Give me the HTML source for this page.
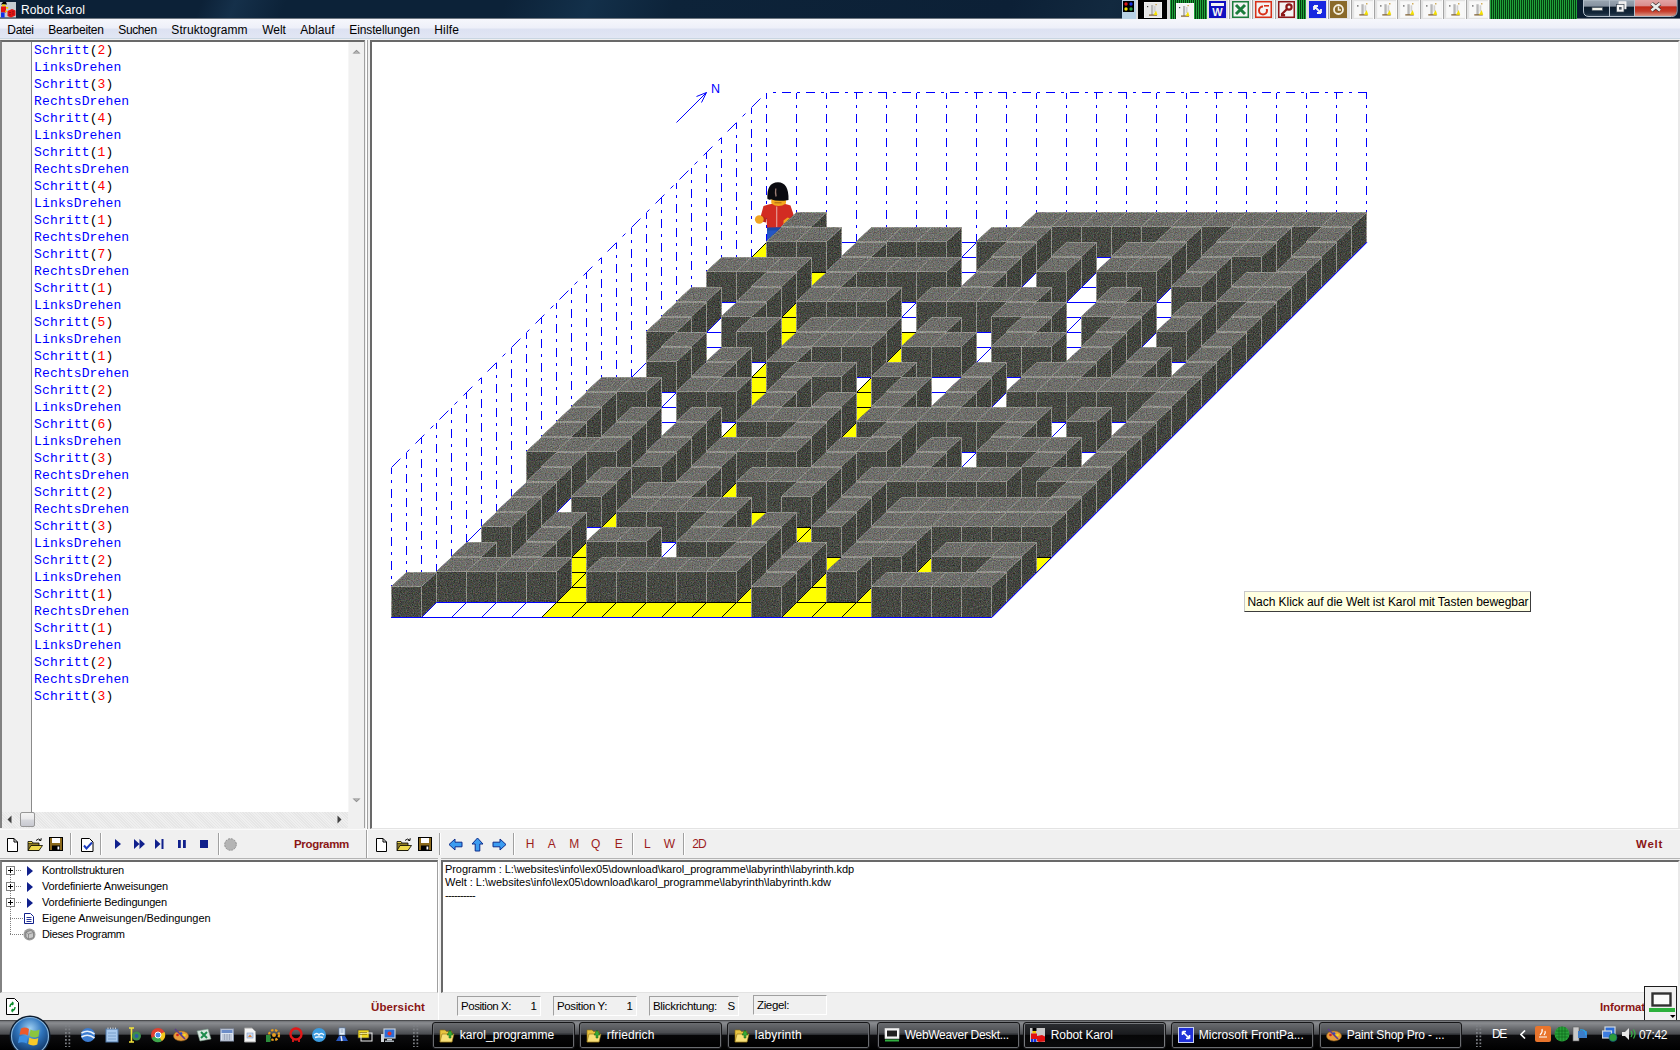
<!DOCTYPE html>
<html lang="de"><head><meta charset="utf-8"><title>Robot Karol</title>
<style>
*{box-sizing:border-box;margin:0;padding:0}
html,body{width:1680px;height:1050px;overflow:hidden;background:#f0f0f0;font-family:"Liberation Sans",sans-serif;font-size:12px;color:#000}
body{position:relative}
.a{position:absolute;white-space:nowrap}
/* title bar */
#tb{position:absolute;left:0;top:0;width:1680px;height:19px;background:linear-gradient(112deg,#0c2137 0,#0c2137 12%,#15304a 14%,#0c2238 17%,#0c2238 30%,#13304a 35%,#0d2339 40%,#0c2036 60%,#12293f 66%,#0b1e33 72%,#0a1c30 100%);border-bottom:1px solid #6d7680}
#tbt{left:21px;top:2.7px;color:#fff;font-size:12px;line-height:15px}
/* menu */
#mb{position:absolute;left:0;top:19px;width:1680px;height:20px;background:linear-gradient(#f6f7fc 0%,#eef0f9 45%,#dde2f2 55%,#e1e6f4 100%);border-bottom:1px solid #c9d6e2}
#mb span{position:absolute;top:4px;font-size:12px;line-height:15px;color:#000}
/* editor */
#ed{position:absolute;left:0;top:40px;width:365px;height:788px;background:#fff;border-top:2px solid #696969;border-left:2px solid #828282;border-right:1px solid #a0a0a0}
#gut{position:absolute;left:0;top:0;width:30px;height:770px;background:#f0f0f0;border-right:1px solid #8a8a8a}
#code{position:absolute;left:32.1px;top:-0.2px;font-family:"Liberation Mono",monospace;font-size:13px;line-height:17px;color:#0000ff;white-space:pre;letter-spacing:0.13px}
#code i{font-style:normal;color:#000}
#code b{font-weight:normal;color:#ff0000}
#vsb{position:absolute;left:346px;top:0;width:16px;height:770px;background:#f0f0f0;border-left:1px solid #f6f6f6}
#hsb{position:absolute;left:0;top:770px;width:346px;height:16px;background:repeating-linear-gradient(45deg,#efefef 0,#efefef 1px,#e6e6e6 1px,#e6e6e6 2px)}
#hsc{position:absolute;left:346px;top:770px;width:16px;height:16px;background:#f0f0f0}
#thumb{position:absolute;left:18px;top:0;width:15px;height:15px;border:1px solid #979797;border-radius:2px;background:linear-gradient(#f4f4f4 0%,#e9e9eb 45%,#d6d7dc 55%,#c8c9d0 100%)}
/* splitter */
#spl{position:absolute;left:366px;top:40px;width:4px;height:790px;background:#f0f0f0;border-left:1px solid #fff;border-right:0}
#spl2{position:absolute;left:367px;top:40px;width:1px;height:790px;background:#a0a0a0}
/* world */
#world{position:absolute;left:370px;top:40px;width:1310px;height:789px;background:#fff;border-top:2px solid #696969;border-left:2px solid #696969;border-right:2px solid #e9e9e9;border-bottom:1px solid #e3e3e3}
#mz{position:absolute;left:372px;top:42px;overflow:hidden}
#tip{left:1244px;top:591px;width:287px;height:21px;background:#ffffe1;border:1px solid;border-color:#c8c8c8 #3c3c3c #3c3c3c #c8c8c8;font-size:12px;line-height:19px}
#tip span{position:absolute;left:2.5px;top:1px}
/* toolbars */
.red{color:#8b1616;font-weight:bold;font-size:11.5px;line-height:15px}
.let{color:#9c1c1c;font-size:12px;line-height:15px;top:837.2px}
.sep{position:absolute;width:2px;height:22px;border-left:1px solid #a0a0a0;border-right:1px solid #fff;top:833px}
#tl{position:absolute;left:0;top:829px;width:1680px;height:1px;background:#fafafa}
/* bottom */
#tree{position:absolute;left:0;top:860px;width:438px;height:133px;box-shadow:0 -1px 0 #f0f0f0,0 -2px 0 #b4b4b4;border-bottom:1px solid #e3e3e3;background:#fff;border-top:2px solid #696969;border-left:2px solid #828282;border-right:1px solid #a0a0a0}
#tree .t{position:absolute;left:40px;font-size:11px;line-height:15px;white-space:nowrap}
#log{position:absolute;left:441px;top:860px;width:1239px;height:133px;background:#fff;border-top:2px solid #696969;border-left:2px solid #696969;border-right:2px solid #e9e9e9;border-bottom:1px solid #e3e3e3;box-shadow:0 -1px 0 #f0f0f0,0 -2px 0 #b4b4b4}
#log span{position:absolute;left:2px;font-size:11px;line-height:13px;white-space:nowrap}
.sf{position:absolute;top:996px;height:20px;border:1px solid;border-color:#a0a0a0 #fff #fff #a0a0a0;font-size:11.5px;line-height:17px}
.sf span{position:absolute;top:1.3px;white-space:nowrap}
/* taskbar */
#tk{position:absolute;left:0;top:1020px;width:1680px;height:30px;background:linear-gradient(#38393b 0,#75777b 1.5px,#8a8c90 3px,#6c6e72 8px,#4a4c50 14px,#0c0c0e 15.5px,#000 100%)}
.tb{position:absolute;top:1022px;height:27px;width:143px;border:1px solid #161618;border-radius:3px;box-shadow:inset 0 0 0 1px #6a6c70;background:linear-gradient(#6a6c70 0,#4c4e52 38%,#2c2e32 46%,#060607 50%,#000 100%);color:#fff;font-size:12px;line-height:15px}
.tb span{position:absolute;left:26.8px;top:5px;white-space:nowrap}
.tb.act{background:linear-gradient(#2c2e32 0,#1a1b1e 45%,#060607 50%,#0a0a0c 100%);box-shadow:inset 0 0 0 1px #77797d}
.tw{color:#fff;font-size:12px;line-height:15px}
#appico{left:0;top:0}
#bx1{left:1122px;top:0px;width:14px;height:19px;background:#b9d2e6}
#dots{left:1123px;top:1px}
#bx2{left:1136px;top:0px;width:2px;height:19px;background:#dcdcdc}
#bx3{left:1138px;top:0px;width:29px;height:19px;background:#000}
#bx4{left:1167px;top:0px;width:3px;height:19px;background:#d8d8d8}
#bx5{left:1170px;top:0px;width:37px;height:19px;background:repeating-linear-gradient(90deg,#1fa33a 0,#1fa33a 1px,#053d10 1px,#053d10 2px)}
#bx6{left:1297px;top:0px;width:9px;height:19px;background:repeating-linear-gradient(90deg,#1fa33a 0,#1fa33a 1px,#053d10 1px,#053d10 2px)}
#bx7{left:1490px;top:0px;width:87px;height:19px;background:repeating-linear-gradient(90deg,#1fa33a 0,#1fa33a 1px,#053d10 1px,#053d10 2px)}
#dc8{left:1144px;top:2px}
#dc9{left:1176px;top:3px}
#bx10{left:1207px;top:0px;width:90px;height:19px;background:#e3e3e3}
#bx11{left:1306px;top:0px;width:184px;height:19px;background:#e3e3e3}
#bx12{left:1227.5px;top:0px;width:2px;height:19px;background:#fbfbfb}
#bx12{border-right:1px solid #a4a4a4}
#bx13{left:1250.5px;top:0px;width:2px;height:19px;background:#fbfbfb}
#bx13{border-right:1px solid #a4a4a4}
#bx14{left:1273.5px;top:0px;width:2px;height:19px;background:#fbfbfb}
#bx14{border-right:1px solid #a4a4a4}
#bx15{left:1326.5px;top:0px;width:2px;height:19px;background:#fbfbfb}
#bx15{border-right:1px solid #a4a4a4}
#bx16{left:1349.5px;top:0px;width:2px;height:19px;background:#fbfbfb}
#bx16{border-right:1px solid #a4a4a4}
#bx17{left:1372.5px;top:0px;width:2px;height:19px;background:#fbfbfb}
#bx17{border-right:1px solid #a4a4a4}
#bx18{left:1395.5px;top:0px;width:2px;height:19px;background:#fbfbfb}
#bx18{border-right:1px solid #a4a4a4}
#bx19{left:1418.5px;top:0px;width:2px;height:19px;background:#fbfbfb}
#bx19{border-right:1px solid #a4a4a4}
#bx20{left:1441.5px;top:0px;width:2px;height:19px;background:#fbfbfb}
#bx20{border-right:1px solid #a4a4a4}
#bx21{left:1464.5px;top:0px;width:2px;height:19px;background:#fbfbfb}
#bx21{border-right:1px solid #a4a4a4}
#bx22{left:1487.5px;top:0px;width:2px;height:19px;background:#fbfbfb}
#bx22{border-right:1px solid #a4a4a4}
#ic23{left:1209px;top:1px}
#ic24{left:1232px;top:1px}
#ic25{left:1255px;top:1px}
#ic26{left:1278px;top:1px}
#ic27{left:1309px;top:1px}
#ic28{left:1330px;top:1px}
#dc29{left:1353.5px;top:1px}
#dc30{left:1376.5px;top:1px}
#dc31{left:1399.5px;top:1px}
#dc32{left:1422.5px;top:1px}
#dc33{left:1445.5px;top:1px}
#dc34{left:1468.5px;top:1px}
#wbtn{left:1578px;top:0}
#mi0{left:7.3px}
#mi1{left:48.3px}
#mi2{left:118.3px}
#mi3{left:171.3px}
#mi4{left:262.3px}
#mi5{left:300.3px}
#mi6{left:349.3px}
#mi7{left:434.3px}
#vup{left:3px;top:7px}
#vdn{left:3px;top:756px}
#hlf{left:5px;top:3px}
#hrt{left:335px;top:3px}
#tsp{left:366px;top:830px;width:2px;height:29px;border-left:1px solid #a0a0a0;border-right:1px solid #fff}
#pnew{left:7px;top:838px}
#popn{left:26.5px;top:836.5px}
#psav{left:49px;top:837px}
#wnew{left:376px;top:838px}
#wopn{left:395.5px;top:836.5px}
#wsav{left:418px;top:837px}
#sp1{left:69.5px}
#sp2{left:99.5px}
#sp3{left:217.5px}
#chk{left:81px;top:837.5px}
#play{left:115px;top:839px}
#ffw{left:133.5px;top:839px}
#stp{left:155px;top:839px}
#pau{left:178px;top:840px}
#stop{left:200px;top:840px}
#gcir{left:223.5px;top:838px}
#lprog{left:294px;top:836.5px}
#sp4{left:438.5px}
#sp5{left:512.5px}
#sp6{left:631.5px}
#sp7{left:683px}
#arl{left:447.5px;top:837px}
#aru{left:469.5px;top:837px}
#arr{left:491.5px;top:837px}
#lt0{left:525.7px}
#lt1{left:547.7px}
#lt2{left:569.3px}
#lt3{left:591px}
#lt4{left:614.7px}
#lt5{left:644px}
#lt6{left:663.7px}
#lt7{left:692.3px}
#lwelt{left:1636px;top:836.5px}
#tr0{top:0.8px}
#pl0{left:4px;top:3.8000000000000007px}
#dl0{left:14px;top:7.800000000000001px;width:6px;height:1px;background:repeating-linear-gradient(90deg,#808080 0,#808080 1px,transparent 1px,transparent 2px)}
#tg0{left:25px;top:3.8000000000000007px}
#tr1{top:16.8px}
#pl1{left:4px;top:19.8px}
#dl1{left:14px;top:23.8px;width:6px;height:1px;background:repeating-linear-gradient(90deg,#808080 0,#808080 1px,transparent 1px,transparent 2px)}
#tg1{left:25px;top:19.8px}
#tr2{top:32.8px}
#pl2{left:4px;top:35.8px}
#dl2{left:14px;top:39.8px;width:6px;height:1px;background:repeating-linear-gradient(90deg,#808080 0,#808080 1px,transparent 1px,transparent 2px)}
#tg2{left:25px;top:35.8px}
#tr3{top:48.8px}
#dl3{left:8px;top:55.8px;width:13px;height:1px;background:repeating-linear-gradient(90deg,#808080 0,#808080 1px,transparent 1px,transparent 2px)}
#tg3{left:22px;top:50.8px}
#tr4{top:64.8px}
#dl4{left:8px;top:71.8px;width:13px;height:1px;background:repeating-linear-gradient(90deg,#808080 0,#808080 1px,transparent 1px,transparent 2px)}
#tg4{left:21px;top:65.8px}
#vdl{left:8px;top:13px;width:1px;height:60px;background:repeating-linear-gradient(#808080 0,#808080 1px,transparent 1px,transparent 2px)}
#lg0{top:0.5px}
#lg1{top:13.5px}
#lg2{top:26.5px}
#rfr{left:6px;top:998px}
#lueb{left:371px;top:1000.3px}
#linf{left:1600px;top:1000.3px}
#vsp{left:438px;top:860px;width:3px;height:160px;background:#f0f0f0;border-left:1px solid #fff}
#sf0{left:457px;width:84px}
#sl0{left:3px}
#sv0{left:72.5px}
#sf1{left:553px;width:84px}
#sl1{left:3px}
#sv1{left:72.5px}
#sf2{left:649px;width:90px}
#sl2{left:3px}
#sv2{left:77.5px}
#sf3{left:753px;width:74px}
#sl3{left:3px}
#sf3{top:995px;height:20px}#sf3 span{top:1.3px}
#inf{left:1644px;top:986px}
#orb{left:9px;top:1015px}
#gr1{left:65px;top:1025px;width:7px;height:22px;background:radial-gradient(circle at 1px 1px,#7c7f84 0.8px,transparent 1px) 0 0/3.5px 3.5px}
#gr2{left:413px;top:1025px;width:7px;height:22px;background:radial-gradient(circle at 1px 1px,#7c7f84 0.8px,transparent 1px) 0 0/3.5px 3.5px}
#gr3{left:1476px;top:1025px;width:7px;height:22px;background:radial-gradient(circle at 1px 1px,#7c7f84 0.8px,transparent 1px) 0 0/3.5px 3.5px}
#ql0{left:80px;top:1027px}
#ql1{left:104px;top:1027px}
#ql2{left:126px;top:1027px}
#ql3{left:150px;top:1027px}
#ql4{left:173px;top:1027px}
#ql5{left:196px;top:1027px}
#ql6{left:219px;top:1027px}
#ql7{left:242px;top:1027px}
#ql8{left:265px;top:1027px}
#ql9{left:288px;top:1027px}
#ql10{left:311px;top:1027px}
#ql11{left:334px;top:1027px}
#ql12{left:357px;top:1027px}
#ql13{left:380px;top:1027px}
#tb0{left:432px}
#ti0{left:6px;top:4px}
#tb1{left:579px}
#ti1{left:6px;top:4px}
#tb2{left:727px}
#ti2{left:6px;top:4px}
#tb3{left:877px}
#ti3{left:6px;top:4px}
#tb4{left:1023px}
#ti4{left:6px;top:4px}
#tb5{left:1171px}
#ti5{left:6px;top:4px}
#tb6{left:1319px}
#ti6{left:6px;top:4px}
#tde{left:1492px;top:1026.5px}
#tlt{left:1520px;top:1030px}
#ty0{left:1535px;top:1026px}
#ty1{left:1554px;top:1026px}
#ty2{left:1572px;top:1026px}
#ty3{left:1602px;top:1026px}
#ty4{left:1621px;top:1026px}
#tclk{left:1639px;top:1028.2px}

</style></head>
<body>
<div id="tb"></div>
<svg class="a" id="appico" width="18" height="19" viewBox="0 0 18 19"><rect x="0" y="2" width="16" height="15.5" fill="#c4ccd2"/><path d="M1 4.5 L3 2 H6 L7 4.5 Z" fill="#000"/><rect x="2" y="4.5" width="3.5" height="2" fill="#f4d000"/><rect x="1" y="6.5" width="5" height="6" fill="#e41010"/><rect x="6" y="7" width="2.2" height="1.6" fill="#f4d000"/><rect x="5.2" y="10.5" width="1.8" height="1.6" fill="#f4d000"/><rect x="1" y="12.5" width="3.6" height="5" fill="#1030e8"/><path d="M7.5 11 L12 9 L15.5 10.5 V15.5 L11 17.5 L7.5 16 Z" fill="#e01414"/><path d="M9 12.5 h2 M12 11.8 h2 M9 14.8 h2 M12 14 h2" stroke="#8c1010" stroke-width="0.8"/></svg>
<span class="a" id="tbt" style="letter-spacing:0.057px">Robot Karol</span>
<div class="a" id="bx1"></div>
<svg class="a" id="dots" width="11" height="11"><rect width="11" height="11" fill="#000"/><circle cx="3" cy="3" r="1.7" fill="#e01818"/><circle cx="8" cy="3" r="1.7" fill="#1830e0"/><circle cx="3" cy="8" r="1.7" fill="#f0e000"/><circle cx="8" cy="8" r="1.7" fill="#28a040"/></svg>
<div class="a" id="bx2"></div>
<div class="a" id="bx3"></div>
<div class="a" id="bx4"></div>
<div class="a" id="bx5"></div>
<div class="a" id="bx6"></div>
<div class="a" id="bx7"></div>
<svg class="a" id="dc8" width="18" height="16" viewBox="0 0 18 16"><rect width="18" height="16" fill="#e6e6e6" stroke="#f8f8f8" stroke-width="1"/><rect x="7" y="3" width="2.2" height="10" fill="#b8b8b8"/><rect x="10" y="4" width="1.6" height="6" fill="#d0d0d0"/><rect x="5" y="12.5" width="8" height="1.2" fill="#806030"/><polygon points="9.5,13 13.5,13 12,8.5" fill="#f4e000"/><rect x="3" y="4" width="1.2" height="1.2" fill="#404040"/><rect x="11.5" y="2" width="1.2" height="1.2" fill="#c09020"/></svg>
<svg class="a" id="dc9" width="18" height="16" viewBox="0 0 18 16"><rect width="18" height="16" fill="#f4f4f4" stroke="#ffffff" stroke-width="1"/><rect x="7" y="3" width="2.2" height="10" fill="#b8b8b8"/><rect x="10" y="4" width="1.6" height="6" fill="#d0d0d0"/><rect x="5" y="12.5" width="8" height="1.2" fill="#806030"/><polygon points="9.5,13 13.5,13 12,8.5" fill="#f4e000"/><rect x="3" y="4" width="1.2" height="1.2" fill="#404040"/><rect x="11.5" y="2" width="1.2" height="1.2" fill="#c09020"/></svg>
<div class="a" id="bx10"></div>
<div class="a" id="bx11"></div>
<div class="a" id="bx12"></div>
<div class="a" id="bx13"></div>
<div class="a" id="bx14"></div>
<div class="a" id="bx15"></div>
<div class="a" id="bx16"></div>
<div class="a" id="bx17"></div>
<div class="a" id="bx18"></div>
<div class="a" id="bx19"></div>
<div class="a" id="bx20"></div>
<div class="a" id="bx21"></div>
<div class="a" id="bx22"></div>
<svg class="a" id="ic23" width="17" height="17" viewBox="0 0 17 17"><rect x="0.5" y="0.5" width="16" height="16" fill="#f4f4f4" stroke="#1010c0" stroke-width="2"/><rect x="1" y="1" width="15" height="15" fill="#1010c0"/><rect x="2" y="2" width="13" height="3" fill="#f4f4f4"/><text x="8.5" y="14.5" font-family="Liberation Sans" font-weight="bold" font-size="11" fill="#f4f4f4" text-anchor="middle">W</text></svg>
<svg class="a" id="ic24" width="17" height="17" viewBox="0 0 17 17"><rect x="0.5" y="0.5" width="16" height="16" fill="#f4f4f4" stroke="#1c7c3c" stroke-width="2"/><path d="M4 4 L13 13 M13 4 L4 13" stroke="#1c7c3c" stroke-width="3"/></svg>
<svg class="a" id="ic25" width="17" height="17" viewBox="0 0 17 17"><rect x="0.5" y="0.5" width="16" height="16" fill="#f4f4f4" stroke="#d83018" stroke-width="2"/><circle cx="8" cy="9.5" r="4" fill="none" stroke="#d83018" stroke-width="2"/><rect x="8" y="3" width="6" height="5" fill="#f4f4f4"/><rect x="9" y="4" width="5" height="1.6" fill="#d83018"/></svg>
<svg class="a" id="ic26" width="17" height="17" viewBox="0 0 17 17"><rect x="0.5" y="0.5" width="16" height="16" fill="#f4f4f4" stroke="#8c1818" stroke-width="2"/><circle cx="11" cy="6" r="2.6" fill="none" stroke="#8c1818" stroke-width="2.2"/><path d="M9 8 L4 13 L4 14.5 L6 14.5 L6 13" stroke="#8c1818" stroke-width="2.2" fill="none"/></svg>
<svg class="a" id="ic27" width="17" height="17" viewBox="0 0 17 17"><rect x="0.5" y="0.5" width="16" height="16" fill="#f4f4f4" stroke="#1828e0" stroke-width="2"/><rect x="1" y="1" width="15" height="15" fill="#1828e0"/><path d="M5 5 L12 12 M5 5 L9 5 M5 5 L5 9 M12 12 L8 12 M12 12 L12 8" stroke="#f4f4f4" stroke-width="1.8" fill="none"/></svg>
<svg class="a" id="ic28" width="17" height="17" viewBox="0 0 17 17"><rect x="0.5" y="0.5" width="16" height="16" fill="#f4f4f4" stroke="#8a6a2a" stroke-width="2"/><rect x="1" y="1" width="15" height="15" fill="#8a6a2a"/><circle cx="8.5" cy="8.5" r="4.5" fill="none" stroke="#f4f0e0" stroke-width="1.8"/><path d="M8.5 5.5 L8.5 9 L11 9" stroke="#f4f0e0" stroke-width="1.5" fill="none"/></svg>
<svg class="a" id="dc29" width="19" height="17" viewBox="0 0 18 16"><rect width="18" height="16" fill="#f8f8f8" stroke="#f0f0f0" stroke-width="1"/><rect x="7" y="3" width="2.2" height="10" fill="#b8b8b8"/><rect x="10" y="4" width="1.6" height="6" fill="#d0d0d0"/><rect x="5" y="12.5" width="8" height="1.2" fill="#806030"/><polygon points="9.5,13 13.5,13 12,8.5" fill="#f4e000"/><rect x="3" y="4" width="1.2" height="1.2" fill="#404040"/><rect x="11.5" y="2" width="1.2" height="1.2" fill="#c09020"/></svg>
<svg class="a" id="dc30" width="19" height="17" viewBox="0 0 18 16"><rect width="18" height="16" fill="#f8f8f8" stroke="#f0f0f0" stroke-width="1"/><rect x="7" y="3" width="2.2" height="10" fill="#b8b8b8"/><rect x="10" y="4" width="1.6" height="6" fill="#d0d0d0"/><rect x="5" y="12.5" width="8" height="1.2" fill="#806030"/><polygon points="9.5,13 13.5,13 12,8.5" fill="#f4e000"/><rect x="3" y="4" width="1.2" height="1.2" fill="#404040"/><rect x="11.5" y="2" width="1.2" height="1.2" fill="#c09020"/></svg>
<svg class="a" id="dc31" width="19" height="17" viewBox="0 0 18 16"><rect width="18" height="16" fill="#f8f8f8" stroke="#f0f0f0" stroke-width="1"/><rect x="7" y="3" width="2.2" height="10" fill="#b8b8b8"/><rect x="10" y="4" width="1.6" height="6" fill="#d0d0d0"/><rect x="5" y="12.5" width="8" height="1.2" fill="#806030"/><polygon points="9.5,13 13.5,13 12,8.5" fill="#f4e000"/><rect x="3" y="4" width="1.2" height="1.2" fill="#404040"/><rect x="11.5" y="2" width="1.2" height="1.2" fill="#c09020"/></svg>
<svg class="a" id="dc32" width="19" height="17" viewBox="0 0 18 16"><rect width="18" height="16" fill="#f8f8f8" stroke="#f0f0f0" stroke-width="1"/><rect x="7" y="3" width="2.2" height="10" fill="#b8b8b8"/><rect x="10" y="4" width="1.6" height="6" fill="#d0d0d0"/><rect x="5" y="12.5" width="8" height="1.2" fill="#806030"/><polygon points="9.5,13 13.5,13 12,8.5" fill="#f4e000"/><rect x="3" y="4" width="1.2" height="1.2" fill="#404040"/><rect x="11.5" y="2" width="1.2" height="1.2" fill="#c09020"/></svg>
<svg class="a" id="dc33" width="19" height="17" viewBox="0 0 18 16"><rect width="18" height="16" fill="#f8f8f8" stroke="#f0f0f0" stroke-width="1"/><rect x="7" y="3" width="2.2" height="10" fill="#b8b8b8"/><rect x="10" y="4" width="1.6" height="6" fill="#d0d0d0"/><rect x="5" y="12.5" width="8" height="1.2" fill="#806030"/><polygon points="9.5,13 13.5,13 12,8.5" fill="#f4e000"/><rect x="3" y="4" width="1.2" height="1.2" fill="#404040"/><rect x="11.5" y="2" width="1.2" height="1.2" fill="#c09020"/></svg>
<svg class="a" id="dc34" width="19" height="17" viewBox="0 0 18 16"><rect width="18" height="16" fill="#f8f8f8" stroke="#f0f0f0" stroke-width="1"/><rect x="7" y="3" width="2.2" height="10" fill="#b8b8b8"/><rect x="10" y="4" width="1.6" height="6" fill="#d0d0d0"/><rect x="5" y="12.5" width="8" height="1.2" fill="#806030"/><polygon points="9.5,13 13.5,13 12,8.5" fill="#f4e000"/><rect x="3" y="4" width="1.2" height="1.2" fill="#404040"/><rect x="11.5" y="2" width="1.2" height="1.2" fill="#c09020"/></svg>
<svg class="a" id="wbtn" width="102" height="19" viewBox="0 0 102 19">
<defs><linearGradient id="gb" x1="0" y1="0" x2="0" y2="1"><stop offset="0" stop-color="#9aa6b1"/><stop offset="0.38" stop-color="#8591a0"/><stop offset="0.42" stop-color="#0b1a2a"/><stop offset="0.8" stop-color="#13273a"/><stop offset="1" stop-color="#3a4b5c"/></linearGradient>
<linearGradient id="gr" x1="0" y1="0" x2="0" y2="1"><stop offset="0" stop-color="#e2a4a4"/><stop offset="0.38" stop-color="#d98c8c"/><stop offset="0.42" stop-color="#bf2818"/><stop offset="0.7" stop-color="#c63c2a"/><stop offset="1" stop-color="#d89484"/></linearGradient></defs>
<path d="M5.5 0 V11 Q5.5 16.5 11 16.5 H93.5 Q99 16.5 99 11 V0 Z" fill="url(#gb)" stroke="#b4c0cc" stroke-width="1"/>
<path d="M57 0 H98.5 V11 Q98.5 16 93.5 16 H57 Z" fill="url(#gr)"/>
<path d="M31.5 0 V16.5 M56.5 0 V16.5" stroke="#b4c0cc" stroke-width="1"/>
<rect x="14" y="7.5" width="10.5" height="3" fill="#f0f0ea" stroke="#44505c" stroke-width="0.6"/>
<rect x="41" y="1.8" width="7" height="7" fill="#e8e8e8" stroke="#fff" stroke-width="0.8"/><rect x="38.5" y="4.5" width="7.5" height="7.5" fill="#f4f4f4" stroke="#3c4854" stroke-width="0.7"/><rect x="41" y="7" width="2.6" height="2.6" fill="#4c5864"/>
<path d="M73.5 3.5 L82 10.5 M82 3.5 L73.5 10.5" stroke="#3c3030" stroke-width="4"/><path d="M73.5 3.5 L82 10.5 M82 3.5 L73.5 10.5" stroke="#ececec" stroke-width="2.6"/></svg>
<div id="mb">
<span id="mi0" style="letter-spacing:-0.323px">Datei</span>
<span id="mi1" style="letter-spacing:-0.265px">Bearbeiten</span>
<span id="mi2" style="letter-spacing:-0.384px">Suchen</span>
<span id="mi3" style="letter-spacing:0.087px">Struktogramm</span>
<span id="mi4" style="letter-spacing:-0.099px">Welt</span>
<span id="mi5" style="letter-spacing:0.061px">Ablauf</span>
<span id="mi6" style="letter-spacing:-0.128px">Einstellungen</span>
<span id="mi7" style="letter-spacing:0.137px">Hilfe</span>
</div>
<div id="ed"><div id="gut"></div><div id="code">Schritt<i>(</i><b>2</b><i>)</i>
LinksDrehen
Schritt<i>(</i><b>3</b><i>)</i>
RechtsDrehen
Schritt<i>(</i><b>4</b><i>)</i>
LinksDrehen
Schritt<i>(</i><b>1</b><i>)</i>
RechtsDrehen
Schritt<i>(</i><b>4</b><i>)</i>
LinksDrehen
Schritt<i>(</i><b>1</b><i>)</i>
RechtsDrehen
Schritt<i>(</i><b>7</b><i>)</i>
RechtsDrehen
Schritt<i>(</i><b>1</b><i>)</i>
LinksDrehen
Schritt<i>(</i><b>5</b><i>)</i>
LinksDrehen
Schritt<i>(</i><b>1</b><i>)</i>
RechtsDrehen
Schritt<i>(</i><b>2</b><i>)</i>
LinksDrehen
Schritt<i>(</i><b>6</b><i>)</i>
LinksDrehen
Schritt<i>(</i><b>3</b><i>)</i>
RechtsDrehen
Schritt<i>(</i><b>2</b><i>)</i>
RechtsDrehen
Schritt<i>(</i><b>3</b><i>)</i>
LinksDrehen
Schritt<i>(</i><b>2</b><i>)</i>
LinksDrehen
Schritt<i>(</i><b>1</b><i>)</i>
RechtsDrehen
Schritt<i>(</i><b>1</b><i>)</i>
LinksDrehen
Schritt<i>(</i><b>2</b><i>)</i>
RechtsDrehen
Schritt<i>(</i><b>3</b><i>)</i></div>
<div id="vsb"><svg class="a" id="vup" width="9" height="5" viewBox="0 0 9 5"><path d="M0.5 4.5 L4.5 0.8 L8.5 4.5 Z" fill="#8c8c8c"/><path d="M1.5 4.5 L4.5 2 L7.5 4.5 Z" fill="#b4b4b4"/></svg><svg class="a" id="vdn" width="9" height="5" viewBox="0 0 9 5"><path d="M0.5 0.5 L4.5 4.2 L8.5 0.5 Z" fill="#8c8c8c"/><path d="M1.5 0.5 L4.5 3 L7.5 0.5 Z" fill="#b4b4b4"/></svg></div>
<div id="hsb"><svg class="a" id="hlf" width="5" height="9" viewBox="0 0 5 9"><path d="M4.5 0.5 L0.5 4.5 L4.5 8.5 Z" fill="#404040"/></svg><div id="thumb"></div><svg class="a" id="hrt" width="5" height="9" viewBox="0 0 5 9"><path d="M0.5 0.5 L4.5 4.5 L0.5 8.5 Z" fill="#404040"/></svg></div><div id="hsc"></div>
</div><div id="spl"></div><div id="spl2"></div>
<div id="world"></div>
<svg id="mz" width="1308" height="786" viewBox="372 42 1308 786"><g transform="translate(0.5 0.5)">
<polygon points="391,617 991,617 1366,242 766,242" fill="#fff" stroke="#0000ff" stroke-width="1"/>
<line x1="391" y1="467" x2="391" y2="617" stroke="#0000ff" stroke-width="1" fill="none" stroke-dasharray="9 6 3 6" stroke-dashoffset="2.5" shape-rendering="crispEdges"/>
<line x1="406" y1="452" x2="406" y2="602" stroke="#0000ff" stroke-width="1" fill="none" stroke-dasharray="9 6 3 6" stroke-dashoffset="2.5" shape-rendering="crispEdges"/>
<line x1="421" y1="437" x2="421" y2="587" stroke="#0000ff" stroke-width="1" fill="none" stroke-dasharray="9 6 3 6" stroke-dashoffset="2.5" shape-rendering="crispEdges"/>
<line x1="436" y1="422" x2="436" y2="572" stroke="#0000ff" stroke-width="1" fill="none" stroke-dasharray="9 6 3 6" stroke-dashoffset="2.5" shape-rendering="crispEdges"/>
<line x1="451" y1="407" x2="451" y2="557" stroke="#0000ff" stroke-width="1" fill="none" stroke-dasharray="9 6 3 6" stroke-dashoffset="2.5" shape-rendering="crispEdges"/>
<line x1="466" y1="392" x2="466" y2="542" stroke="#0000ff" stroke-width="1" fill="none" stroke-dasharray="9 6 3 6" stroke-dashoffset="2.5" shape-rendering="crispEdges"/>
<line x1="481" y1="377" x2="481" y2="527" stroke="#0000ff" stroke-width="1" fill="none" stroke-dasharray="9 6 3 6" stroke-dashoffset="2.5" shape-rendering="crispEdges"/>
<line x1="496" y1="362" x2="496" y2="512" stroke="#0000ff" stroke-width="1" fill="none" stroke-dasharray="9 6 3 6" stroke-dashoffset="2.5" shape-rendering="crispEdges"/>
<line x1="511" y1="347" x2="511" y2="497" stroke="#0000ff" stroke-width="1" fill="none" stroke-dasharray="9 6 3 6" stroke-dashoffset="2.5" shape-rendering="crispEdges"/>
<line x1="526" y1="332" x2="526" y2="482" stroke="#0000ff" stroke-width="1" fill="none" stroke-dasharray="9 6 3 6" stroke-dashoffset="2.5" shape-rendering="crispEdges"/>
<line x1="541" y1="317" x2="541" y2="467" stroke="#0000ff" stroke-width="1" fill="none" stroke-dasharray="9 6 3 6" stroke-dashoffset="2.5" shape-rendering="crispEdges"/>
<line x1="556" y1="302" x2="556" y2="452" stroke="#0000ff" stroke-width="1" fill="none" stroke-dasharray="9 6 3 6" stroke-dashoffset="2.5" shape-rendering="crispEdges"/>
<line x1="571" y1="287" x2="571" y2="437" stroke="#0000ff" stroke-width="1" fill="none" stroke-dasharray="9 6 3 6" stroke-dashoffset="2.5" shape-rendering="crispEdges"/>
<line x1="586" y1="272" x2="586" y2="422" stroke="#0000ff" stroke-width="1" fill="none" stroke-dasharray="9 6 3 6" stroke-dashoffset="2.5" shape-rendering="crispEdges"/>
<line x1="601" y1="257" x2="601" y2="407" stroke="#0000ff" stroke-width="1" fill="none" stroke-dasharray="9 6 3 6" stroke-dashoffset="2.5" shape-rendering="crispEdges"/>
<line x1="616" y1="242" x2="616" y2="392" stroke="#0000ff" stroke-width="1" fill="none" stroke-dasharray="9 6 3 6" stroke-dashoffset="2.5" shape-rendering="crispEdges"/>
<line x1="631" y1="227" x2="631" y2="377" stroke="#0000ff" stroke-width="1" fill="none" stroke-dasharray="9 6 3 6" stroke-dashoffset="2.5" shape-rendering="crispEdges"/>
<line x1="646" y1="212" x2="646" y2="362" stroke="#0000ff" stroke-width="1" fill="none" stroke-dasharray="9 6 3 6" stroke-dashoffset="2.5" shape-rendering="crispEdges"/>
<line x1="661" y1="197" x2="661" y2="347" stroke="#0000ff" stroke-width="1" fill="none" stroke-dasharray="9 6 3 6" stroke-dashoffset="2.5" shape-rendering="crispEdges"/>
<line x1="676" y1="182" x2="676" y2="332" stroke="#0000ff" stroke-width="1" fill="none" stroke-dasharray="9 6 3 6" stroke-dashoffset="2.5" shape-rendering="crispEdges"/>
<line x1="691" y1="167" x2="691" y2="317" stroke="#0000ff" stroke-width="1" fill="none" stroke-dasharray="9 6 3 6" stroke-dashoffset="2.5" shape-rendering="crispEdges"/>
<line x1="706" y1="152" x2="706" y2="302" stroke="#0000ff" stroke-width="1" fill="none" stroke-dasharray="9 6 3 6" stroke-dashoffset="2.5" shape-rendering="crispEdges"/>
<line x1="721" y1="137" x2="721" y2="287" stroke="#0000ff" stroke-width="1" fill="none" stroke-dasharray="9 6 3 6" stroke-dashoffset="2.5" shape-rendering="crispEdges"/>
<line x1="736" y1="122" x2="736" y2="272" stroke="#0000ff" stroke-width="1" fill="none" stroke-dasharray="9 6 3 6" stroke-dashoffset="2.5" shape-rendering="crispEdges"/>
<line x1="751" y1="107" x2="751" y2="257" stroke="#0000ff" stroke-width="1" fill="none" stroke-dasharray="9 6 3 6" stroke-dashoffset="2.5" shape-rendering="crispEdges"/>
<line x1="766" y1="92" x2="766" y2="242" stroke="#0000ff" stroke-width="1" fill="none" stroke-dasharray="9 6 3 6" stroke-dashoffset="2.5" shape-rendering="crispEdges"/>
<line x1="796" y1="92" x2="796" y2="242" stroke="#0000ff" stroke-width="1" fill="none" stroke-dasharray="9 6 3 6" stroke-dashoffset="2.5" shape-rendering="crispEdges"/>
<line x1="826" y1="92" x2="826" y2="242" stroke="#0000ff" stroke-width="1" fill="none" stroke-dasharray="9 6 3 6" stroke-dashoffset="2.5" shape-rendering="crispEdges"/>
<line x1="856" y1="92" x2="856" y2="242" stroke="#0000ff" stroke-width="1" fill="none" stroke-dasharray="9 6 3 6" stroke-dashoffset="2.5" shape-rendering="crispEdges"/>
<line x1="886" y1="92" x2="886" y2="242" stroke="#0000ff" stroke-width="1" fill="none" stroke-dasharray="9 6 3 6" stroke-dashoffset="2.5" shape-rendering="crispEdges"/>
<line x1="916" y1="92" x2="916" y2="242" stroke="#0000ff" stroke-width="1" fill="none" stroke-dasharray="9 6 3 6" stroke-dashoffset="2.5" shape-rendering="crispEdges"/>
<line x1="946" y1="92" x2="946" y2="242" stroke="#0000ff" stroke-width="1" fill="none" stroke-dasharray="9 6 3 6" stroke-dashoffset="2.5" shape-rendering="crispEdges"/>
<line x1="976" y1="92" x2="976" y2="242" stroke="#0000ff" stroke-width="1" fill="none" stroke-dasharray="9 6 3 6" stroke-dashoffset="2.5" shape-rendering="crispEdges"/>
<line x1="1006" y1="92" x2="1006" y2="242" stroke="#0000ff" stroke-width="1" fill="none" stroke-dasharray="9 6 3 6" stroke-dashoffset="2.5" shape-rendering="crispEdges"/>
<line x1="1036" y1="92" x2="1036" y2="242" stroke="#0000ff" stroke-width="1" fill="none" stroke-dasharray="9 6 3 6" stroke-dashoffset="2.5" shape-rendering="crispEdges"/>
<line x1="1066" y1="92" x2="1066" y2="242" stroke="#0000ff" stroke-width="1" fill="none" stroke-dasharray="9 6 3 6" stroke-dashoffset="2.5" shape-rendering="crispEdges"/>
<line x1="1096" y1="92" x2="1096" y2="242" stroke="#0000ff" stroke-width="1" fill="none" stroke-dasharray="9 6 3 6" stroke-dashoffset="2.5" shape-rendering="crispEdges"/>
<line x1="1126" y1="92" x2="1126" y2="242" stroke="#0000ff" stroke-width="1" fill="none" stroke-dasharray="9 6 3 6" stroke-dashoffset="2.5" shape-rendering="crispEdges"/>
<line x1="1156" y1="92" x2="1156" y2="242" stroke="#0000ff" stroke-width="1" fill="none" stroke-dasharray="9 6 3 6" stroke-dashoffset="2.5" shape-rendering="crispEdges"/>
<line x1="1186" y1="92" x2="1186" y2="242" stroke="#0000ff" stroke-width="1" fill="none" stroke-dasharray="9 6 3 6" stroke-dashoffset="2.5" shape-rendering="crispEdges"/>
<line x1="1216" y1="92" x2="1216" y2="242" stroke="#0000ff" stroke-width="1" fill="none" stroke-dasharray="9 6 3 6" stroke-dashoffset="2.5" shape-rendering="crispEdges"/>
<line x1="1246" y1="92" x2="1246" y2="242" stroke="#0000ff" stroke-width="1" fill="none" stroke-dasharray="9 6 3 6" stroke-dashoffset="2.5" shape-rendering="crispEdges"/>
<line x1="1276" y1="92" x2="1276" y2="242" stroke="#0000ff" stroke-width="1" fill="none" stroke-dasharray="9 6 3 6" stroke-dashoffset="2.5" shape-rendering="crispEdges"/>
<line x1="1306" y1="92" x2="1306" y2="242" stroke="#0000ff" stroke-width="1" fill="none" stroke-dasharray="9 6 3 6" stroke-dashoffset="2.5" shape-rendering="crispEdges"/>
<line x1="1336" y1="92" x2="1336" y2="242" stroke="#0000ff" stroke-width="1" fill="none" stroke-dasharray="9 6 3 6" stroke-dashoffset="2.5" shape-rendering="crispEdges"/>
<line x1="1366" y1="92" x2="1366" y2="212" stroke="#0000ff" stroke-width="1" fill="none" stroke-dasharray="9 6 3 6" stroke-dashoffset="2.5" shape-rendering="crispEdges"/>
<line x1="766" y1="92" x2="1366" y2="92" stroke="#0000ff" stroke-width="1" fill="none" stroke-dasharray="9 6 3 6" stroke-dashoffset="8.1" shape-rendering="crispEdges"/>
<line x1="766" y1="92" x2="391" y2="467" stroke="#0000ff" stroke-width="1" fill="none" stroke-dasharray="12.73 8.49 4.24 8.49" stroke-dashoffset="25.46"/>
<path d="M676 122 L706 92 M706 92 L696 96 M706 92 L701 102" stroke="#0000ff" stroke-width="1" fill="none"/>
<text x="710.5" y="92.1" font-family="Liberation Sans, sans-serif" font-size="12.5" fill="#0000ff">N</text>
<polygon points="751,257 781,257 796,242 766,242" fill="#ffff00" stroke="#000" stroke-width="1"/>
<polygon points="811,257 841,257 856,242 826,242" fill="#fff" stroke="#0000ff" stroke-width="1"/>
<polygon points="841,257 871,257 886,242 856,242" fill="#fff" stroke="#0000ff" stroke-width="1"/>
<polygon points="871,257 901,257 916,242 886,242" fill="#fff" stroke="#0000ff" stroke-width="1"/>
<polygon points="901,257 931,257 946,242 916,242" fill="#fff" stroke="#0000ff" stroke-width="1"/>
<polygon points="931,257 961,257 976,242 946,242" fill="#fff" stroke="#0000ff" stroke-width="1"/>
<polygon points="961,257 991,257 1006,242 976,242" fill="#fff" stroke="#0000ff" stroke-width="1"/>
<polygon points="991,257 1021,257 1036,242 1006,242" fill="#fff" stroke="#0000ff" stroke-width="1"/>
<polygon points="736,272 766,272 781,257 751,257" fill="#ffff00" stroke="#000" stroke-width="1"/>
<polygon points="826,272 856,272 871,257 841,257" fill="#fff" stroke="#0000ff" stroke-width="1"/>
<polygon points="946,272 976,272 991,257 961,257" fill="#fff" stroke="#0000ff" stroke-width="1"/>
<polygon points="1036,272 1066,272 1081,257 1051,257" fill="#fff" stroke="#0000ff" stroke-width="1"/>
<polygon points="1066,272 1096,272 1111,257 1081,257" fill="#fff" stroke="#0000ff" stroke-width="1"/>
<polygon points="1096,272 1126,272 1141,257 1111,257" fill="#fff" stroke="#0000ff" stroke-width="1"/>
<polygon points="1126,272 1156,272 1171,257 1141,257" fill="#fff" stroke="#0000ff" stroke-width="1"/>
<polygon points="1186,272 1216,272 1231,257 1201,257" fill="#fff" stroke="#0000ff" stroke-width="1"/>
<polygon points="1276,272 1306,272 1321,257 1291,257" fill="#fff" stroke="#0000ff" stroke-width="1"/>
<polygon points="721,287 751,287 766,272 736,272" fill="#ffff00" stroke="#000" stroke-width="1"/>
<polygon points="751,287 781,287 796,272 766,272" fill="#ffff00" stroke="#000" stroke-width="1"/>
<polygon points="781,287 811,287 826,272 796,272" fill="#ffff00" stroke="#000" stroke-width="1"/>
<polygon points="811,287 841,287 856,272 826,272" fill="#ffff00" stroke="#000" stroke-width="1"/>
<polygon points="871,287 901,287 916,272 886,272" fill="#fff" stroke="#0000ff" stroke-width="1"/>
<polygon points="901,287 931,287 946,272 916,272" fill="#fff" stroke="#0000ff" stroke-width="1"/>
<polygon points="931,287 961,287 976,272 946,272" fill="#fff" stroke="#0000ff" stroke-width="1"/>
<polygon points="961,287 991,287 1006,272 976,272" fill="#fff" stroke="#0000ff" stroke-width="1"/>
<polygon points="1021,287 1051,287 1066,272 1036,272" fill="#fff" stroke="#0000ff" stroke-width="1"/>
<polygon points="1081,287 1111,287 1126,272 1096,272" fill="#fff" stroke="#0000ff" stroke-width="1"/>
<polygon points="1171,287 1201,287 1216,272 1186,272" fill="#fff" stroke="#0000ff" stroke-width="1"/>
<polygon points="1261,287 1291,287 1306,272 1276,272" fill="#fff" stroke="#0000ff" stroke-width="1"/>
<polygon points="796,302 826,302 841,287 811,287" fill="#ffff00" stroke="#000" stroke-width="1"/>
<polygon points="946,302 976,302 991,287 961,287" fill="#fff" stroke="#0000ff" stroke-width="1"/>
<polygon points="1006,302 1036,302 1051,287 1021,287" fill="#fff" stroke="#0000ff" stroke-width="1"/>
<polygon points="1066,302 1096,302 1111,287 1081,287" fill="#fff" stroke="#0000ff" stroke-width="1"/>
<polygon points="1156,302 1186,302 1201,287 1171,287" fill="#fff" stroke="#0000ff" stroke-width="1"/>
<polygon points="1216,302 1246,302 1261,287 1231,287" fill="#fff" stroke="#0000ff" stroke-width="1"/>
<polygon points="1246,302 1276,302 1291,287 1261,287" fill="#fff" stroke="#0000ff" stroke-width="1"/>
<polygon points="691,317 721,317 736,302 706,302" fill="#fff" stroke="#0000ff" stroke-width="1"/>
<polygon points="721,317 751,317 766,302 736,302" fill="#fff" stroke="#0000ff" stroke-width="1"/>
<polygon points="781,317 811,317 826,302 796,302" fill="#ffff00" stroke="#000" stroke-width="1"/>
<polygon points="841,317 871,317 886,302 856,302" fill="#fff" stroke="#0000ff" stroke-width="1"/>
<polygon points="871,317 901,317 916,302 886,302" fill="#fff" stroke="#0000ff" stroke-width="1"/>
<polygon points="901,317 931,317 946,302 916,302" fill="#fff" stroke="#0000ff" stroke-width="1"/>
<polygon points="931,317 961,317 976,302 946,302" fill="#fff" stroke="#0000ff" stroke-width="1"/>
<polygon points="991,317 1021,317 1036,302 1006,302" fill="#fff" stroke="#0000ff" stroke-width="1"/>
<polygon points="1021,317 1051,317 1066,302 1036,302" fill="#fff" stroke="#0000ff" stroke-width="1"/>
<polygon points="1051,317 1081,317 1096,302 1066,302" fill="#fff" stroke="#0000ff" stroke-width="1"/>
<polygon points="1081,317 1111,317 1126,302 1096,302" fill="#fff" stroke="#0000ff" stroke-width="1"/>
<polygon points="1111,317 1141,317 1156,302 1126,302" fill="#fff" stroke="#0000ff" stroke-width="1"/>
<polygon points="1141,317 1171,317 1186,302 1156,302" fill="#fff" stroke="#0000ff" stroke-width="1"/>
<polygon points="1201,317 1231,317 1246,302 1216,302" fill="#fff" stroke="#0000ff" stroke-width="1"/>
<polygon points="706,332 736,332 751,317 721,317" fill="#fff" stroke="#0000ff" stroke-width="1"/>
<polygon points="766,332 796,332 811,317 781,317" fill="#ffff00" stroke="#000" stroke-width="1"/>
<polygon points="886,332 916,332 931,317 901,317" fill="#fff" stroke="#0000ff" stroke-width="1"/>
<polygon points="1036,332 1066,332 1081,317 1051,317" fill="#fff" stroke="#0000ff" stroke-width="1"/>
<polygon points="1066,332 1096,332 1111,317 1081,317" fill="#fff" stroke="#0000ff" stroke-width="1"/>
<polygon points="1126,332 1156,332 1171,317 1141,317" fill="#fff" stroke="#0000ff" stroke-width="1"/>
<polygon points="1156,332 1186,332 1201,317 1171,317" fill="#fff" stroke="#0000ff" stroke-width="1"/>
<polygon points="1186,332 1216,332 1231,317 1201,317" fill="#fff" stroke="#0000ff" stroke-width="1"/>
<polygon points="691,347 721,347 736,332 706,332" fill="#fff" stroke="#0000ff" stroke-width="1"/>
<polygon points="751,347 781,347 796,332 766,332" fill="#ffff00" stroke="#000" stroke-width="1"/>
<polygon points="781,347 811,347 826,332 796,332" fill="#ffff00" stroke="#000" stroke-width="1"/>
<polygon points="811,347 841,347 856,332 826,332" fill="#fff" stroke="#0000ff" stroke-width="1"/>
<polygon points="841,347 871,347 886,332 856,332" fill="#fff" stroke="#0000ff" stroke-width="1"/>
<polygon points="871,347 901,347 916,332 886,332" fill="#ffff00" stroke="#000" stroke-width="1"/>
<polygon points="901,347 931,347 946,332 916,332" fill="#ffff00" stroke="#000" stroke-width="1"/>
<polygon points="931,347 961,347 976,332 946,332" fill="#fff" stroke="#0000ff" stroke-width="1"/>
<polygon points="961,347 991,347 1006,332 976,332" fill="#fff" stroke="#0000ff" stroke-width="1"/>
<polygon points="1051,347 1081,347 1096,332 1066,332" fill="#fff" stroke="#0000ff" stroke-width="1"/>
<polygon points="1141,347 1171,347 1186,332 1156,332" fill="#fff" stroke="#0000ff" stroke-width="1"/>
<polygon points="1201,347 1231,347 1246,332 1216,332" fill="#fff" stroke="#0000ff" stroke-width="1"/>
<polygon points="676,362 706,362 721,347 691,347" fill="#fff" stroke="#0000ff" stroke-width="1"/>
<polygon points="706,362 736,362 751,347 721,347" fill="#fff" stroke="#0000ff" stroke-width="1"/>
<polygon points="766,362 796,362 811,347 781,347" fill="#ffff00" stroke="#000" stroke-width="1"/>
<polygon points="886,362 916,362 931,347 901,347" fill="#ffff00" stroke="#000" stroke-width="1"/>
<polygon points="946,362 976,362 991,347 961,347" fill="#fff" stroke="#0000ff" stroke-width="1"/>
<polygon points="976,362 1006,362 1021,347 991,347" fill="#fff" stroke="#0000ff" stroke-width="1"/>
<polygon points="1036,362 1066,362 1081,347 1051,347" fill="#fff" stroke="#0000ff" stroke-width="1"/>
<polygon points="1066,362 1096,362 1111,347 1081,347" fill="#fff" stroke="#0000ff" stroke-width="1"/>
<polygon points="1126,362 1156,362 1171,347 1141,347" fill="#fff" stroke="#0000ff" stroke-width="1"/>
<polygon points="1186,362 1216,362 1231,347 1201,347" fill="#fff" stroke="#0000ff" stroke-width="1"/>
<polygon points="631,377 661,377 676,362 646,362" fill="#fff" stroke="#0000ff" stroke-width="1"/>
<polygon points="691,377 721,377 736,362 706,362" fill="#fff" stroke="#0000ff" stroke-width="1"/>
<polygon points="721,377 751,377 766,362 736,362" fill="#fff" stroke="#0000ff" stroke-width="1"/>
<polygon points="751,377 781,377 796,362 766,362" fill="#ffff00" stroke="#000" stroke-width="1"/>
<polygon points="871,377 901,377 916,362 886,362" fill="#ffff00" stroke="#000" stroke-width="1"/>
<polygon points="961,377 991,377 1006,362 976,362" fill="#fff" stroke="#0000ff" stroke-width="1"/>
<polygon points="1051,377 1081,377 1096,362 1066,362" fill="#fff" stroke="#0000ff" stroke-width="1"/>
<polygon points="1111,377 1141,377 1156,362 1126,362" fill="#fff" stroke="#0000ff" stroke-width="1"/>
<polygon points="1141,377 1171,377 1186,362 1156,362" fill="#fff" stroke="#0000ff" stroke-width="1"/>
<polygon points="1171,377 1201,377 1216,362 1186,362" fill="#fff" stroke="#0000ff" stroke-width="1"/>
<polygon points="616,392 646,392 661,377 631,377" fill="#fff" stroke="#0000ff" stroke-width="1"/>
<polygon points="676,392 706,392 721,377 691,377" fill="#fff" stroke="#0000ff" stroke-width="1"/>
<polygon points="736,392 766,392 781,377 751,377" fill="#ffff00" stroke="#000" stroke-width="1"/>
<polygon points="796,392 826,392 841,377 811,377" fill="#fff" stroke="#0000ff" stroke-width="1"/>
<polygon points="826,392 856,392 871,377 841,377" fill="#fff" stroke="#0000ff" stroke-width="1"/>
<polygon points="856,392 886,392 901,377 871,377" fill="#ffff00" stroke="#000" stroke-width="1"/>
<polygon points="886,392 916,392 931,377 901,377" fill="#fff" stroke="#0000ff" stroke-width="1"/>
<polygon points="916,392 946,392 961,377 931,377" fill="#fff" stroke="#0000ff" stroke-width="1"/>
<polygon points="946,392 976,392 991,377 961,377" fill="#fff" stroke="#0000ff" stroke-width="1"/>
<polygon points="976,392 1006,392 1021,377 991,377" fill="#fff" stroke="#0000ff" stroke-width="1"/>
<polygon points="1006,392 1036,392 1051,377 1021,377" fill="#fff" stroke="#0000ff" stroke-width="1"/>
<polygon points="1036,392 1066,392 1081,377 1051,377" fill="#fff" stroke="#0000ff" stroke-width="1"/>
<polygon points="1096,392 1126,392 1141,377 1111,377" fill="#fff" stroke="#0000ff" stroke-width="1"/>
<polygon points="1156,392 1186,392 1201,377 1171,377" fill="#fff" stroke="#0000ff" stroke-width="1"/>
<polygon points="601,407 631,407 646,392 616,392" fill="#fff" stroke="#0000ff" stroke-width="1"/>
<polygon points="631,407 661,407 676,392 646,392" fill="#fff" stroke="#0000ff" stroke-width="1"/>
<polygon points="661,407 691,407 706,392 676,392" fill="#fff" stroke="#0000ff" stroke-width="1"/>
<polygon points="721,407 751,407 766,392 736,392" fill="#ffff00" stroke="#000" stroke-width="1"/>
<polygon points="751,407 781,407 796,392 766,392" fill="#ffff00" stroke="#000" stroke-width="1"/>
<polygon points="841,407 871,407 886,392 856,392" fill="#ffff00" stroke="#000" stroke-width="1"/>
<polygon points="901,407 931,407 946,392 916,392" fill="#fff" stroke="#0000ff" stroke-width="1"/>
<polygon points="931,407 961,407 976,392 946,392" fill="#fff" stroke="#0000ff" stroke-width="1"/>
<polygon points="991,407 1021,407 1036,392 1006,392" fill="#fff" stroke="#0000ff" stroke-width="1"/>
<polygon points="1081,407 1111,407 1126,392 1096,392" fill="#fff" stroke="#0000ff" stroke-width="1"/>
<polygon points="1141,407 1171,407 1186,392 1156,392" fill="#fff" stroke="#0000ff" stroke-width="1"/>
<polygon points="646,422 676,422 691,407 661,407" fill="#fff" stroke="#0000ff" stroke-width="1"/>
<polygon points="736,422 766,422 781,407 751,407" fill="#ffff00" stroke="#000" stroke-width="1"/>
<polygon points="796,422 826,422 841,407 811,407" fill="#fff" stroke="#0000ff" stroke-width="1"/>
<polygon points="826,422 856,422 871,407 841,407" fill="#ffff00" stroke="#000" stroke-width="1"/>
<polygon points="856,422 886,422 901,407 871,407" fill="#ffff00" stroke="#000" stroke-width="1"/>
<polygon points="916,422 946,422 961,407 931,407" fill="#fff" stroke="#0000ff" stroke-width="1"/>
<polygon points="976,422 1006,422 1021,407 991,407" fill="#fff" stroke="#0000ff" stroke-width="1"/>
<polygon points="601,437 631,437 646,422 616,422" fill="#fff" stroke="#0000ff" stroke-width="1"/>
<polygon points="631,437 661,437 676,422 646,422" fill="#fff" stroke="#0000ff" stroke-width="1"/>
<polygon points="661,437 691,437 706,422 676,422" fill="#fff" stroke="#0000ff" stroke-width="1"/>
<polygon points="691,437 721,437 736,422 706,422" fill="#fff" stroke="#0000ff" stroke-width="1"/>
<polygon points="721,437 751,437 766,422 736,422" fill="#ffff00" stroke="#000" stroke-width="1"/>
<polygon points="781,437 811,437 826,422 796,422" fill="#fff" stroke="#0000ff" stroke-width="1"/>
<polygon points="841,437 871,437 886,422 856,422" fill="#ffff00" stroke="#000" stroke-width="1"/>
<polygon points="901,437 931,437 946,422 916,422" fill="#fff" stroke="#0000ff" stroke-width="1"/>
<polygon points="961,437 991,437 1006,422 976,422" fill="#fff" stroke="#0000ff" stroke-width="1"/>
<polygon points="991,437 1021,437 1036,422 1006,422" fill="#fff" stroke="#0000ff" stroke-width="1"/>
<polygon points="1021,437 1051,437 1066,422 1036,422" fill="#fff" stroke="#0000ff" stroke-width="1"/>
<polygon points="1051,437 1081,437 1096,422 1066,422" fill="#fff" stroke="#0000ff" stroke-width="1"/>
<polygon points="1081,437 1111,437 1126,422 1096,422" fill="#fff" stroke="#0000ff" stroke-width="1"/>
<polygon points="1111,437 1141,437 1156,422 1126,422" fill="#fff" stroke="#0000ff" stroke-width="1"/>
<polygon points="586,452 616,452 631,437 601,437" fill="#fff" stroke="#0000ff" stroke-width="1"/>
<polygon points="646,452 676,452 691,437 661,437" fill="#fff" stroke="#0000ff" stroke-width="1"/>
<polygon points="706,452 736,452 751,437 721,437" fill="#ffff00" stroke="#000" stroke-width="1"/>
<polygon points="826,452 856,452 871,437 841,437" fill="#ffff00" stroke="#000" stroke-width="1"/>
<polygon points="1036,452 1066,452 1081,437 1051,437" fill="#fff" stroke="#0000ff" stroke-width="1"/>
<polygon points="1096,452 1126,452 1141,437 1111,437" fill="#fff" stroke="#0000ff" stroke-width="1"/>
<polygon points="571,467 601,467 616,452 586,452" fill="#fff" stroke="#0000ff" stroke-width="1"/>
<polygon points="631,467 661,467 676,452 646,452" fill="#fff" stroke="#0000ff" stroke-width="1"/>
<polygon points="691,467 721,467 736,452 706,452" fill="#ffff00" stroke="#000" stroke-width="1"/>
<polygon points="721,467 751,467 766,452 736,452" fill="#fff" stroke="#0000ff" stroke-width="1"/>
<polygon points="751,467 781,467 796,452 766,452" fill="#fff" stroke="#0000ff" stroke-width="1"/>
<polygon points="811,467 841,467 856,452 826,452" fill="#ffff00" stroke="#000" stroke-width="1"/>
<polygon points="841,467 871,467 886,452 856,452" fill="#fff" stroke="#0000ff" stroke-width="1"/>
<polygon points="901,467 931,467 946,452 916,452" fill="#fff" stroke="#0000ff" stroke-width="1"/>
<polygon points="931,467 961,467 976,452 946,452" fill="#fff" stroke="#0000ff" stroke-width="1"/>
<polygon points="961,467 991,467 1006,452 976,452" fill="#fff" stroke="#0000ff" stroke-width="1"/>
<polygon points="1021,467 1051,467 1066,452 1036,452" fill="#fff" stroke="#0000ff" stroke-width="1"/>
<polygon points="1051,467 1081,467 1096,452 1066,452" fill="#fff" stroke="#0000ff" stroke-width="1"/>
<polygon points="1081,467 1111,467 1126,452 1096,452" fill="#fff" stroke="#0000ff" stroke-width="1"/>
<polygon points="616,482 646,482 661,467 631,467" fill="#fff" stroke="#0000ff" stroke-width="1"/>
<polygon points="676,482 706,482 721,467 691,467" fill="#ffff00" stroke="#000" stroke-width="1"/>
<polygon points="796,482 826,482 841,467 811,467" fill="#ffff00" stroke="#000" stroke-width="1"/>
<polygon points="886,482 916,482 931,467 901,467" fill="#fff" stroke="#0000ff" stroke-width="1"/>
<polygon points="946,482 976,482 991,467 961,467" fill="#fff" stroke="#0000ff" stroke-width="1"/>
<polygon points="1066,482 1096,482 1111,467 1081,467" fill="#fff" stroke="#0000ff" stroke-width="1"/>
<polygon points="511,497 541,497 556,482 526,482" fill="#fff" stroke="#0000ff" stroke-width="1"/>
<polygon points="571,497 601,497 616,482 586,482" fill="#fff" stroke="#0000ff" stroke-width="1"/>
<polygon points="601,497 631,497 646,482 616,482" fill="#fff" stroke="#0000ff" stroke-width="1"/>
<polygon points="661,497 691,497 706,482 676,482" fill="#ffff00" stroke="#000" stroke-width="1"/>
<polygon points="721,497 751,497 766,482 736,482" fill="#ffff00" stroke="#000" stroke-width="1"/>
<polygon points="751,497 781,497 796,482 766,482" fill="#ffff00" stroke="#000" stroke-width="1"/>
<polygon points="781,497 811,497 826,482 796,482" fill="#ffff00" stroke="#000" stroke-width="1"/>
<polygon points="841,497 871,497 886,482 856,482" fill="#fff" stroke="#0000ff" stroke-width="1"/>
<polygon points="871,497 901,497 916,482 886,482" fill="#fff" stroke="#0000ff" stroke-width="1"/>
<polygon points="931,497 961,497 976,482 946,482" fill="#fff" stroke="#0000ff" stroke-width="1"/>
<polygon points="961,497 991,497 1006,482 976,482" fill="#fff" stroke="#0000ff" stroke-width="1"/>
<polygon points="991,497 1021,497 1036,482 1006,482" fill="#fff" stroke="#0000ff" stroke-width="1"/>
<polygon points="1051,497 1081,497 1096,482 1066,482" fill="#fff" stroke="#0000ff" stroke-width="1"/>
<polygon points="496,512 526,512 541,497 511,497" fill="#fff" stroke="#0000ff" stroke-width="1"/>
<polygon points="556,512 586,512 601,497 571,497" fill="#fff" stroke="#0000ff" stroke-width="1"/>
<polygon points="616,512 646,512 661,497 631,497" fill="#ffff00" stroke="#000" stroke-width="1"/>
<polygon points="646,512 676,512 691,497 661,497" fill="#ffff00" stroke="#000" stroke-width="1"/>
<polygon points="706,512 736,512 751,497 721,497" fill="#ffff00" stroke="#000" stroke-width="1"/>
<polygon points="826,512 856,512 871,497 841,497" fill="#fff" stroke="#0000ff" stroke-width="1"/>
<polygon points="1006,512 1036,512 1051,497 1021,497" fill="#fff" stroke="#0000ff" stroke-width="1"/>
<polygon points="481,527 511,527 526,512 496,512" fill="#fff" stroke="#0000ff" stroke-width="1"/>
<polygon points="541,527 571,527 586,512 556,512" fill="#fff" stroke="#0000ff" stroke-width="1"/>
<polygon points="601,527 631,527 646,512 616,512" fill="#ffff00" stroke="#000" stroke-width="1"/>
<polygon points="691,527 721,527 736,512 706,512" fill="#ffff00" stroke="#000" stroke-width="1"/>
<polygon points="721,527 751,527 766,512 736,512" fill="#ffff00" stroke="#000" stroke-width="1"/>
<polygon points="751,527 781,527 796,512 766,512" fill="#ffff00" stroke="#000" stroke-width="1"/>
<polygon points="811,527 841,527 856,512 826,512" fill="#fff" stroke="#0000ff" stroke-width="1"/>
<polygon points="871,527 901,527 916,512 886,512" fill="#fff" stroke="#0000ff" stroke-width="1"/>
<polygon points="901,527 931,527 946,512 916,512" fill="#fff" stroke="#0000ff" stroke-width="1"/>
<polygon points="931,527 961,527 976,512 946,512" fill="#fff" stroke="#0000ff" stroke-width="1"/>
<polygon points="961,527 991,527 1006,512 976,512" fill="#fff" stroke="#0000ff" stroke-width="1"/>
<polygon points="991,527 1021,527 1036,512 1006,512" fill="#fff" stroke="#0000ff" stroke-width="1"/>
<polygon points="1021,527 1051,527 1066,512 1036,512" fill="#fff" stroke="#0000ff" stroke-width="1"/>
<polygon points="466,542 496,542 511,527 481,527" fill="#fff" stroke="#0000ff" stroke-width="1"/>
<polygon points="526,542 556,542 571,527 541,527" fill="#fff" stroke="#0000ff" stroke-width="1"/>
<polygon points="556,542 586,542 601,527 571,527" fill="#fff" stroke="#0000ff" stroke-width="1"/>
<polygon points="586,542 616,542 631,527 601,527" fill="#ffff00" stroke="#000" stroke-width="1"/>
<polygon points="736,542 766,542 781,527 751,527" fill="#ffff00" stroke="#000" stroke-width="1"/>
<polygon points="766,542 796,542 811,527 781,527" fill="#ffff00" stroke="#000" stroke-width="1"/>
<polygon points="796,542 826,542 841,527 811,527" fill="#ffff00" stroke="#000" stroke-width="1"/>
<polygon points="856,542 886,542 901,527 871,527" fill="#fff" stroke="#0000ff" stroke-width="1"/>
<polygon points="451,557 481,557 496,542 466,542" fill="#fff" stroke="#0000ff" stroke-width="1"/>
<polygon points="511,557 541,557 556,542 526,542" fill="#fff" stroke="#0000ff" stroke-width="1"/>
<polygon points="571,557 601,557 616,542 586,542" fill="#ffff00" stroke="#000" stroke-width="1"/>
<polygon points="601,557 631,557 646,542 616,542" fill="#fff" stroke="#0000ff" stroke-width="1"/>
<polygon points="631,557 661,557 676,542 646,542" fill="#fff" stroke="#0000ff" stroke-width="1"/>
<polygon points="661,557 691,557 706,542 676,542" fill="#fff" stroke="#0000ff" stroke-width="1"/>
<polygon points="721,557 751,557 766,542 736,542" fill="#fff" stroke="#0000ff" stroke-width="1"/>
<polygon points="781,557 811,557 826,542 796,542" fill="#ffff00" stroke="#000" stroke-width="1"/>
<polygon points="841,557 871,557 886,542 856,542" fill="#fff" stroke="#0000ff" stroke-width="1"/>
<polygon points="436,572 466,572 481,557 451,557" fill="#fff" stroke="#0000ff" stroke-width="1"/>
<polygon points="466,572 496,572 511,557 481,557" fill="#fff" stroke="#0000ff" stroke-width="1"/>
<polygon points="496,572 526,572 541,557 511,557" fill="#fff" stroke="#0000ff" stroke-width="1"/>
<polygon points="556,572 586,572 601,557 571,557" fill="#ffff00" stroke="#000" stroke-width="1"/>
<polygon points="646,572 676,572 691,557 661,557" fill="#fff" stroke="#0000ff" stroke-width="1"/>
<polygon points="766,572 796,572 811,557 781,557" fill="#ffff00" stroke="#000" stroke-width="1"/>
<polygon points="796,572 826,572 841,557 811,557" fill="#ffff00" stroke="#000" stroke-width="1"/>
<polygon points="826,572 856,572 871,557 841,557" fill="#ffff00" stroke="#000" stroke-width="1"/>
<polygon points="916,572 946,572 961,557 931,557" fill="#ffff00" stroke="#000" stroke-width="1"/>
<polygon points="946,572 976,572 991,557 961,557" fill="#ffff00" stroke="#000" stroke-width="1"/>
<polygon points="976,572 1006,572 1021,557 991,557" fill="#ffff00" stroke="#000" stroke-width="1"/>
<polygon points="1006,572 1036,572 1051,557 1021,557" fill="#ffff00" stroke="#000" stroke-width="1"/>
<polygon points="421,587 451,587 466,572 436,572" fill="#fff" stroke="#0000ff" stroke-width="1"/>
<polygon points="481,587 511,587 526,572 496,572" fill="#fff" stroke="#0000ff" stroke-width="1"/>
<polygon points="541,587 571,587 586,572 556,572" fill="#ffff00" stroke="#000" stroke-width="1"/>
<polygon points="571,587 601,587 616,572 586,572" fill="#ffff00" stroke="#000" stroke-width="1"/>
<polygon points="601,587 631,587 646,572 616,572" fill="#fff" stroke="#0000ff" stroke-width="1"/>
<polygon points="631,587 661,587 676,572 646,572" fill="#fff" stroke="#0000ff" stroke-width="1"/>
<polygon points="661,587 691,587 706,572 676,572" fill="#fff" stroke="#0000ff" stroke-width="1"/>
<polygon points="691,587 721,587 736,572 706,572" fill="#fff" stroke="#0000ff" stroke-width="1"/>
<polygon points="751,587 781,587 796,572 766,572" fill="#ffff00" stroke="#000" stroke-width="1"/>
<polygon points="811,587 841,587 856,572 826,572" fill="#ffff00" stroke="#000" stroke-width="1"/>
<polygon points="901,587 931,587 946,572 916,572" fill="#ffff00" stroke="#000" stroke-width="1"/>
<polygon points="406,602 436,602 451,587 421,587" fill="#fff" stroke="#0000ff" stroke-width="1"/>
<polygon points="556,602 586,602 601,587 571,587" fill="#ffff00" stroke="#000" stroke-width="1"/>
<polygon points="736,602 766,602 781,587 751,587" fill="#ffff00" stroke="#000" stroke-width="1"/>
<polygon points="796,602 826,602 841,587 811,587" fill="#ffff00" stroke="#000" stroke-width="1"/>
<polygon points="856,602 886,602 901,587 871,587" fill="#ffff00" stroke="#000" stroke-width="1"/>
<polygon points="886,602 916,602 931,587 901,587" fill="#ffff00" stroke="#000" stroke-width="1"/>
<polygon points="916,602 946,602 961,587 931,587" fill="#fff" stroke="#0000ff" stroke-width="1"/>
<polygon points="946,602 976,602 991,587 961,587" fill="#fff" stroke="#0000ff" stroke-width="1"/>
<polygon points="421,617 451,617 466,602 436,602" fill="#fff" stroke="#0000ff" stroke-width="1"/>
<polygon points="451,617 481,617 496,602 466,602" fill="#fff" stroke="#0000ff" stroke-width="1"/>
<polygon points="481,617 511,617 526,602 496,602" fill="#fff" stroke="#0000ff" stroke-width="1"/>
<polygon points="511,617 541,617 556,602 526,602" fill="#fff" stroke="#0000ff" stroke-width="1"/>
<polygon points="541,617 571,617 586,602 556,602" fill="#ffff00" stroke="#000" stroke-width="1"/>
<polygon points="571,617 601,617 616,602 586,602" fill="#ffff00" stroke="#000" stroke-width="1"/>
<polygon points="601,617 631,617 646,602 616,602" fill="#ffff00" stroke="#000" stroke-width="1"/>
<polygon points="631,617 661,617 676,602 646,602" fill="#ffff00" stroke="#000" stroke-width="1"/>
<polygon points="661,617 691,617 706,602 676,602" fill="#ffff00" stroke="#000" stroke-width="1"/>
<polygon points="691,617 721,617 736,602 706,602" fill="#ffff00" stroke="#000" stroke-width="1"/>
<polygon points="721,617 751,617 766,602 736,602" fill="#ffff00" stroke="#000" stroke-width="1"/>
<polygon points="781,617 811,617 826,602 796,602" fill="#ffff00" stroke="#000" stroke-width="1"/>
<polygon points="811,617 841,617 856,602 826,602" fill="#ffff00" stroke="#000" stroke-width="1"/>
<polygon points="841,617 871,617 886,602 856,602" fill="#ffff00" stroke="#000" stroke-width="1"/>
<g id="karol">
<rect x="766.5" y="226" width="14" height="17" fill="#2456c4"/>
<path d="M766.5 226 h14 v4 h-14z" fill="#1c48a8"/>
<path d="M763 205.5 Q770 202.5 777 203 Q786 203 790 205 L793 214 L792.5 226.5 L766.5 227 L766 218 L760 216.5 Z" fill="#d22c22"/>
<path d="M776.2 206 V226.5" stroke="#e49a94" stroke-width="1.2"/>
<path d="M760.5 214.5 L766 218 L765.5 222 L761 221 Z" fill="#b8241c"/>
<ellipse cx="758.8" cy="219" rx="4.4" ry="4.2" fill="#f0a422"/>
<path d="M783 220 l4 -3 l3 1 l-3 7 l-4 1z" fill="#f0a422"/>
<path d="M770.8 198 H785.5 V203 Q778 208 770.8 203 Z" fill="#f2a81e"/>
<path d="M774 202.3 H781" stroke="#a05c10" stroke-width="0.9"/>
<path d="M767 199.5 Q765.5 182 777.5 181.8 Q788.5 182 788 199.5 Q777 201.5 770.5 198.8 Q768 200.5 766.5 197 Z" fill="#0b0b10"/>
<path d="M775.3 188 Q774.6 192 775.6 196" stroke="#9a7c74" stroke-width="1.3" fill="none"/>
</g>

<filter id="nz" x="0" y="0" width="1" height="1" color-interpolation-filters="sRGB"><feTurbulence type="fractalNoise" baseFrequency="0.85" numOctaves="2" seed="11" result="t"/><feColorMatrix in="t" type="matrix" values=".6 .2 .2 0 0 .2 .6 .2 0 0 .2 .2 .6 0 0 0 0 0 0 1" result="n"/><feComposite in="SourceGraphic" in2="n" operator="arithmetic" k1="0" k2="1" k3="0.6" k4="-0.3" result="c"/><feComposite in="c" in2="SourceGraphic" operator="in"/></filter>
<g filter="url(#nz)" stroke-width="1" stroke-linecap="square" fill="none">
<path d="M811 256.5V226L826 212V241.5Z" fill="#42443e"/><path d="M781 226H811L826 212H796Z" fill="#6e6e6a"/><path d="M780.5 226H811V256.5H780.5Z" fill="#474943"/><path d="M781 256V226H811V256M781 226L796 212H826V241M811 226L826 212" stroke="#92928c"/>
<path d="M1051 256.5V226L1066 212V241.5Z" fill="#42443e"/><path d="M1021 226H1051L1066 212H1036Z" fill="#6e6e6a"/><path d="M1020.5 226H1051V256.5H1020.5Z" fill="#474943"/><path d="M1021 256V226H1051V256M1021 226L1036 212H1066V241M1051 226L1066 212" stroke="#92928c"/>
<path d="M1081 256.5V226L1096 212V241.5Z" fill="#42443e"/><path d="M1051 226H1081L1096 212H1066Z" fill="#6e6e6a"/><path d="M1050.5 226H1081V256.5H1050.5Z" fill="#474943"/><path d="M1051 256V226H1081V256M1051 226L1066 212H1096V241M1081 226L1096 212" stroke="#92928c"/>
<path d="M1111 256.5V226L1126 212V241.5Z" fill="#42443e"/><path d="M1081 226H1111L1126 212H1096Z" fill="#6e6e6a"/><path d="M1080.5 226H1111V256.5H1080.5Z" fill="#474943"/><path d="M1081 256V226H1111V256M1081 226L1096 212H1126V241M1111 226L1126 212" stroke="#92928c"/>
<path d="M1141 256.5V226L1156 212V241.5Z" fill="#42443e"/><path d="M1111 226H1141L1156 212H1126Z" fill="#6e6e6a"/><path d="M1110.5 226H1141V256.5H1110.5Z" fill="#474943"/><path d="M1111 256V226H1141V256M1111 226L1126 212H1156V241M1141 226L1156 212" stroke="#92928c"/>
<path d="M1171 256.5V226L1186 212V241.5Z" fill="#42443e"/><path d="M1141 226H1171L1186 212H1156Z" fill="#6e6e6a"/><path d="M1140.5 226H1171V256.5H1140.5Z" fill="#474943"/><path d="M1141 256V226H1171V256M1141 226L1156 212H1186V241M1171 226L1186 212" stroke="#92928c"/>
<path d="M1201 256.5V226L1216 212V241.5Z" fill="#42443e"/><path d="M1171 226H1201L1216 212H1186Z" fill="#6e6e6a"/><path d="M1170.5 226H1201V256.5H1170.5Z" fill="#474943"/><path d="M1171 256V226H1201V256M1171 226L1186 212H1216V241M1201 226L1216 212" stroke="#92928c"/>
<path d="M1231 256.5V226L1246 212V241.5Z" fill="#42443e"/><path d="M1201 226H1231L1246 212H1216Z" fill="#6e6e6a"/><path d="M1200.5 226H1231V256.5H1200.5Z" fill="#474943"/><path d="M1201 256V226H1231V256M1201 226L1216 212H1246V241M1231 226L1246 212" stroke="#92928c"/>
<path d="M1261 256.5V226L1276 212V241.5Z" fill="#42443e"/><path d="M1231 226H1261L1276 212H1246Z" fill="#6e6e6a"/><path d="M1230.5 226H1261V256.5H1230.5Z" fill="#474943"/><path d="M1231 256V226H1261V256M1231 226L1246 212H1276V241M1261 226L1276 212" stroke="#92928c"/>
<path d="M1291 256.5V226L1306 212V241.5Z" fill="#42443e"/><path d="M1261 226H1291L1306 212H1276Z" fill="#6e6e6a"/><path d="M1260.5 226H1291V256.5H1260.5Z" fill="#474943"/><path d="M1261 256V226H1291V256M1261 226L1276 212H1306V241M1291 226L1306 212" stroke="#92928c"/>
<path d="M1321 256.5V226L1336 212V241.5Z" fill="#42443e"/><path d="M1291 226H1321L1336 212H1306Z" fill="#6e6e6a"/><path d="M1290.5 226H1321V256.5H1290.5Z" fill="#474943"/><path d="M1291 256V226H1321V256M1291 226L1306 212H1336V241M1321 226L1336 212" stroke="#92928c"/>
<path d="M1351 256.5V226L1366 212V241.5Z" fill="#42443e"/><path d="M1321 226H1351L1366 212H1336Z" fill="#6e6e6a"/><path d="M1320.5 226H1351V256.5H1320.5Z" fill="#474943"/><path d="M1321 256V226H1351V256M1321 226L1336 212H1366V241M1351 226L1366 212" stroke="#92928c"/>
<path d="M796 271.5V241L811 227V256.5Z" fill="#42443e"/><path d="M766 241H796L811 227H781Z" fill="#6e6e6a"/><path d="M765.5 241H796V271.5H765.5Z" fill="#474943"/><path d="M766 271V241H796V271M766 241L781 227H811V256M796 241L811 227" stroke="#92928c"/>
<path d="M826 271.5V241L841 227V256.5Z" fill="#42443e"/><path d="M796 241H826L841 227H811Z" fill="#6e6e6a"/><path d="M795.5 241H826V271.5H795.5Z" fill="#474943"/><path d="M796 271V241H826V271M796 241L811 227H841V256M826 241L841 227" stroke="#92928c"/>
<path d="M886 271.5V241L901 227V256.5Z" fill="#42443e"/><path d="M856 241H886L901 227H871Z" fill="#6e6e6a"/><path d="M855.5 241H886V271.5H855.5Z" fill="#474943"/><path d="M856 271V241H886V271M856 241L871 227H901V256M886 241L901 227" stroke="#92928c"/>
<path d="M916 271.5V241L931 227V256.5Z" fill="#42443e"/><path d="M886 241H916L931 227H901Z" fill="#6e6e6a"/><path d="M885.5 241H916V271.5H885.5Z" fill="#474943"/><path d="M886 271V241H916V271M886 241L901 227H931V256M916 241L931 227" stroke="#92928c"/>
<path d="M946 271.5V241L961 227V256.5Z" fill="#42443e"/><path d="M916 241H946L961 227H931Z" fill="#6e6e6a"/><path d="M915.5 241H946V271.5H915.5Z" fill="#474943"/><path d="M916 271V241H946V271M916 241L931 227H961V256M946 241L961 227" stroke="#92928c"/>
<path d="M1006 271.5V241L1021 227V256.5Z" fill="#42443e"/><path d="M976 241H1006L1021 227H991Z" fill="#6e6e6a"/><path d="M975.5 241H1006V271.5H975.5Z" fill="#474943"/><path d="M976 271V241H1006V271M976 241L991 227H1021V256M1006 241L1021 227" stroke="#92928c"/>
<path d="M1036 271.5V241L1051 227V256.5Z" fill="#42443e"/><path d="M1006 241H1036L1051 227H1021Z" fill="#6e6e6a"/><path d="M1005.5 241H1036V271.5H1005.5Z" fill="#474943"/><path d="M1006 271V241H1036V271M1006 241L1021 227H1051V256M1036 241L1051 227" stroke="#92928c"/>
<path d="M1186 271.5V241L1201 227V256.5Z" fill="#42443e"/><path d="M1156 241H1186L1201 227H1171Z" fill="#6e6e6a"/><path d="M1155.5 241H1186V271.5H1155.5Z" fill="#474943"/><path d="M1156 271V241H1186V271M1156 241L1171 227H1201V256M1186 241L1201 227" stroke="#92928c"/>
<path d="M1246 271.5V241L1261 227V256.5Z" fill="#42443e"/><path d="M1216 241H1246L1261 227H1231Z" fill="#6e6e6a"/><path d="M1215.5 241H1246V271.5H1215.5Z" fill="#474943"/><path d="M1216 271V241H1246V271M1216 241L1231 227H1261V256M1246 241L1261 227" stroke="#92928c"/>
<path d="M1276 271.5V241L1291 227V256.5Z" fill="#42443e"/><path d="M1246 241H1276L1291 227H1261Z" fill="#6e6e6a"/><path d="M1245.5 241H1276V271.5H1245.5Z" fill="#474943"/><path d="M1246 271V241H1276V271M1246 241L1261 227H1291V256M1276 241L1291 227" stroke="#92928c"/>
<path d="M1336 271.5V241L1351 227V256.5Z" fill="#42443e"/><path d="M1306 241H1336L1351 227H1321Z" fill="#6e6e6a"/><path d="M1305.5 241H1336V271.5H1305.5Z" fill="#474943"/><path d="M1306 271V241H1336V271M1306 241L1321 227H1351V256M1336 241L1351 227" stroke="#92928c"/>
<path d="M871 286.5V256L886 242V271.5Z" fill="#42443e"/><path d="M841 256H871L886 242H856Z" fill="#6e6e6a"/><path d="M840.5 256H871V286.5H840.5Z" fill="#474943"/><path d="M841 286V256H871V286M841 256L856 242H886V271M871 256L886 242" stroke="#92928c"/>
<path d="M1021 286.5V256L1036 242V271.5Z" fill="#42443e"/><path d="M991 256H1021L1036 242H1006Z" fill="#6e6e6a"/><path d="M990.5 256H1021V286.5H990.5Z" fill="#474943"/><path d="M991 286V256H1021V286M991 256L1006 242H1036V271M1021 256L1036 242" stroke="#92928c"/>
<path d="M1081 286.5V256L1096 242V271.5Z" fill="#42443e"/><path d="M1051 256H1081L1096 242H1066Z" fill="#6e6e6a"/><path d="M1050.5 256H1081V286.5H1050.5Z" fill="#474943"/><path d="M1051 286V256H1081V286M1051 256L1066 242H1096V271M1081 256L1096 242" stroke="#92928c"/>
<path d="M1141 286.5V256L1156 242V271.5Z" fill="#42443e"/><path d="M1111 256H1141L1156 242H1126Z" fill="#6e6e6a"/><path d="M1110.5 256H1141V286.5H1110.5Z" fill="#474943"/><path d="M1111 286V256H1141V286M1111 256L1126 242H1156V271M1141 256L1156 242" stroke="#92928c"/>
<path d="M1171 286.5V256L1186 242V271.5Z" fill="#42443e"/><path d="M1141 256H1171L1186 242H1156Z" fill="#6e6e6a"/><path d="M1140.5 256H1171V286.5H1140.5Z" fill="#474943"/><path d="M1141 286V256H1171V286M1141 256L1156 242H1186V271M1171 256L1186 242" stroke="#92928c"/>
<path d="M1231 286.5V256L1246 242V271.5Z" fill="#42443e"/><path d="M1201 256H1231L1246 242H1216Z" fill="#6e6e6a"/><path d="M1200.5 256H1231V286.5H1200.5Z" fill="#474943"/><path d="M1201 286V256H1231V286M1201 256L1216 242H1246V271M1231 256L1246 242" stroke="#92928c"/>
<path d="M1261 286.5V256L1276 242V271.5Z" fill="#42443e"/><path d="M1231 256H1261L1276 242H1246Z" fill="#6e6e6a"/><path d="M1230.5 256H1261V286.5H1230.5Z" fill="#474943"/><path d="M1231 286V256H1261V286M1231 256L1246 242H1276V271M1261 256L1276 242" stroke="#92928c"/>
<path d="M1321 286.5V256L1336 242V271.5Z" fill="#42443e"/><path d="M1291 256H1321L1336 242H1306Z" fill="#6e6e6a"/><path d="M1290.5 256H1321V286.5H1290.5Z" fill="#474943"/><path d="M1291 286V256H1321V286M1291 256L1306 242H1336V271M1321 256L1336 242" stroke="#92928c"/>
<path d="M736 301.5V271L751 257V286.5Z" fill="#42443e"/><path d="M706 271H736L751 257H721Z" fill="#6e6e6a"/><path d="M705.5 271H736V301.5H705.5Z" fill="#474943"/><path d="M706 301V271H736V301M706 271L721 257H751V286M736 271L751 257" stroke="#92928c"/>
<path d="M766 301.5V271L781 257V286.5Z" fill="#42443e"/><path d="M736 271H766L781 257H751Z" fill="#6e6e6a"/><path d="M735.5 271H766V301.5H735.5Z" fill="#474943"/><path d="M736 301V271H766V301M736 271L751 257H781V286M766 271L781 257" stroke="#92928c"/>
<path d="M796 301.5V271L811 257V286.5Z" fill="#42443e"/><path d="M766 271H796L811 257H781Z" fill="#6e6e6a"/><path d="M765.5 271H796V301.5H765.5Z" fill="#474943"/><path d="M766 301V271H796V301M766 271L781 257H811V286M796 271L811 257" stroke="#92928c"/>
<path d="M856 301.5V271L871 257V286.5Z" fill="#42443e"/><path d="M826 271H856L871 257H841Z" fill="#6e6e6a"/><path d="M825.5 271H856V301.5H825.5Z" fill="#474943"/><path d="M826 301V271H856V301M826 271L841 257H871V286M856 271L871 257" stroke="#92928c"/>
<path d="M886 301.5V271L901 257V286.5Z" fill="#42443e"/><path d="M856 271H886L901 257H871Z" fill="#6e6e6a"/><path d="M855.5 271H886V301.5H855.5Z" fill="#474943"/><path d="M856 301V271H886V301M856 271L871 257H901V286M886 271L901 257" stroke="#92928c"/>
<path d="M916 301.5V271L931 257V286.5Z" fill="#42443e"/><path d="M886 271H916L931 257H901Z" fill="#6e6e6a"/><path d="M885.5 271H916V301.5H885.5Z" fill="#474943"/><path d="M886 301V271H916V301M886 271L901 257H931V286M916 271L931 257" stroke="#92928c"/>
<path d="M946 301.5V271L961 257V286.5Z" fill="#42443e"/><path d="M916 271H946L961 257H931Z" fill="#6e6e6a"/><path d="M915.5 271H946V301.5H915.5Z" fill="#474943"/><path d="M916 301V271H946V301M916 271L931 257H961V286M946 271L961 257" stroke="#92928c"/>
<path d="M1006 301.5V271L1021 257V286.5Z" fill="#42443e"/><path d="M976 271H1006L1021 257H991Z" fill="#6e6e6a"/><path d="M975.5 271H1006V301.5H975.5Z" fill="#474943"/><path d="M976 301V271H1006V301M976 271L991 257H1021V286M1006 271L1021 257" stroke="#92928c"/>
<path d="M1066 301.5V271L1081 257V286.5Z" fill="#42443e"/><path d="M1036 271H1066L1081 257H1051Z" fill="#6e6e6a"/><path d="M1035.5 271H1066V301.5H1035.5Z" fill="#474943"/><path d="M1036 301V271H1066V301M1036 271L1051 257H1081V286M1066 271L1081 257" stroke="#92928c"/>
<path d="M1126 301.5V271L1141 257V286.5Z" fill="#42443e"/><path d="M1096 271H1126L1141 257H1111Z" fill="#6e6e6a"/><path d="M1095.5 271H1126V301.5H1095.5Z" fill="#474943"/><path d="M1096 301V271H1126V301M1096 271L1111 257H1141V286M1126 271L1141 257" stroke="#92928c"/>
<path d="M1156 301.5V271L1171 257V286.5Z" fill="#42443e"/><path d="M1126 271H1156L1171 257H1141Z" fill="#6e6e6a"/><path d="M1125.5 271H1156V301.5H1125.5Z" fill="#474943"/><path d="M1126 301V271H1156V301M1126 271L1141 257H1171V286M1156 271L1171 257" stroke="#92928c"/>
<path d="M1216 301.5V271L1231 257V286.5Z" fill="#42443e"/><path d="M1186 271H1216L1231 257H1201Z" fill="#6e6e6a"/><path d="M1185.5 271H1216V301.5H1185.5Z" fill="#474943"/><path d="M1186 301V271H1216V301M1186 271L1201 257H1231V286M1216 271L1231 257" stroke="#92928c"/>
<path d="M1306 301.5V271L1321 257V286.5Z" fill="#42443e"/><path d="M1276 271H1306L1321 257H1291Z" fill="#6e6e6a"/><path d="M1275.5 271H1306V301.5H1275.5Z" fill="#474943"/><path d="M1276 301V271H1306V301M1276 271L1291 257H1321V286M1306 271L1321 257" stroke="#92928c"/>
<path d="M781 316.5V286L796 272V301.5Z" fill="#42443e"/><path d="M751 286H781L796 272H766Z" fill="#6e6e6a"/><path d="M750.5 286H781V316.5H750.5Z" fill="#474943"/><path d="M751 316V286H781V316M751 286L766 272H796V301M781 286L796 272" stroke="#92928c"/>
<path d="M841 316.5V286L856 272V301.5Z" fill="#42443e"/><path d="M811 286H841L856 272H826Z" fill="#6e6e6a"/><path d="M810.5 286H841V316.5H810.5Z" fill="#474943"/><path d="M811 316V286H841V316M811 286L826 272H856V301M841 286L856 272" stroke="#92928c"/>
<path d="M991 316.5V286L1006 272V301.5Z" fill="#42443e"/><path d="M961 286H991L1006 272H976Z" fill="#6e6e6a"/><path d="M960.5 286H991V316.5H960.5Z" fill="#474943"/><path d="M961 316V286H991V316M961 286L976 272H1006V301M991 286L1006 272" stroke="#92928c"/>
<path d="M1201 316.5V286L1216 272V301.5Z" fill="#42443e"/><path d="M1171 286H1201L1216 272H1186Z" fill="#6e6e6a"/><path d="M1170.5 286H1201V316.5H1170.5Z" fill="#474943"/><path d="M1171 316V286H1201V316M1171 286L1186 272H1216V301M1201 286L1216 272" stroke="#92928c"/>
<path d="M1261 316.5V286L1276 272V301.5Z" fill="#42443e"/><path d="M1231 286H1261L1276 272H1246Z" fill="#6e6e6a"/><path d="M1230.5 286H1261V316.5H1230.5Z" fill="#474943"/><path d="M1231 316V286H1261V316M1231 286L1246 272H1276V301M1261 286L1276 272" stroke="#92928c"/>
<path d="M1291 316.5V286L1306 272V301.5Z" fill="#42443e"/><path d="M1261 286H1291L1306 272H1276Z" fill="#6e6e6a"/><path d="M1260.5 286H1291V316.5H1260.5Z" fill="#474943"/><path d="M1261 316V286H1291V316M1261 286L1276 272H1306V301M1291 286L1306 272" stroke="#92928c"/>
<path d="M706 331.5V301L721 287V316.5Z" fill="#42443e"/><path d="M676 301H706L721 287H691Z" fill="#6e6e6a"/><path d="M675.5 301H706V331.5H675.5Z" fill="#474943"/><path d="M676 331V301H706V331M676 301L691 287H721V316M706 301L721 287" stroke="#92928c"/>
<path d="M766 331.5V301L781 287V316.5Z" fill="#42443e"/><path d="M736 301H766L781 287H751Z" fill="#6e6e6a"/><path d="M735.5 301H766V331.5H735.5Z" fill="#474943"/><path d="M736 331V301H766V331M736 301L751 287H781V316M766 301L781 287" stroke="#92928c"/>
<path d="M826 331.5V301L841 287V316.5Z" fill="#42443e"/><path d="M796 301H826L841 287H811Z" fill="#6e6e6a"/><path d="M795.5 301H826V331.5H795.5Z" fill="#474943"/><path d="M796 331V301H826V331M796 301L811 287H841V316M826 301L841 287" stroke="#92928c"/>
<path d="M856 331.5V301L871 287V316.5Z" fill="#42443e"/><path d="M826 301H856L871 287H841Z" fill="#6e6e6a"/><path d="M825.5 301H856V331.5H825.5Z" fill="#474943"/><path d="M826 331V301H856V331M826 301L841 287H871V316M856 301L871 287" stroke="#92928c"/>
<path d="M886 331.5V301L901 287V316.5Z" fill="#42443e"/><path d="M856 301H886L901 287H871Z" fill="#6e6e6a"/><path d="M855.5 301H886V331.5H855.5Z" fill="#474943"/><path d="M856 331V301H886V331M856 301L871 287H901V316M886 301L901 287" stroke="#92928c"/>
<path d="M946 331.5V301L961 287V316.5Z" fill="#42443e"/><path d="M916 301H946L961 287H931Z" fill="#6e6e6a"/><path d="M915.5 301H946V331.5H915.5Z" fill="#474943"/><path d="M916 331V301H946V331M916 301L931 287H961V316M946 301L961 287" stroke="#92928c"/>
<path d="M976 331.5V301L991 287V316.5Z" fill="#42443e"/><path d="M946 301H976L991 287H961Z" fill="#6e6e6a"/><path d="M945.5 301H976V331.5H945.5Z" fill="#474943"/><path d="M946 331V301H976V331M946 301L961 287H991V316M976 301L991 287" stroke="#92928c"/>
<path d="M1006 331.5V301L1021 287V316.5Z" fill="#42443e"/><path d="M976 301H1006L1021 287H991Z" fill="#6e6e6a"/><path d="M975.5 301H1006V331.5H975.5Z" fill="#474943"/><path d="M976 331V301H1006V331M976 301L991 287H1021V316M1006 301L1021 287" stroke="#92928c"/>
<path d="M1036 331.5V301L1051 287V316.5Z" fill="#42443e"/><path d="M1006 301H1036L1051 287H1021Z" fill="#6e6e6a"/><path d="M1005.5 301H1036V331.5H1005.5Z" fill="#474943"/><path d="M1006 331V301H1036V331M1006 301L1021 287H1051V316M1036 301L1051 287" stroke="#92928c"/>
<path d="M1126 331.5V301L1141 287V316.5Z" fill="#42443e"/><path d="M1096 301H1126L1141 287H1111Z" fill="#6e6e6a"/><path d="M1095.5 301H1126V331.5H1095.5Z" fill="#474943"/><path d="M1096 331V301H1126V331M1096 301L1111 287H1141V316M1126 301L1141 287" stroke="#92928c"/>
<path d="M1246 331.5V301L1261 287V316.5Z" fill="#42443e"/><path d="M1216 301H1246L1261 287H1231Z" fill="#6e6e6a"/><path d="M1215.5 301H1246V331.5H1215.5Z" fill="#474943"/><path d="M1216 331V301H1246V331M1216 301L1231 287H1261V316M1246 301L1261 287" stroke="#92928c"/>
<path d="M1276 331.5V301L1291 287V316.5Z" fill="#42443e"/><path d="M1246 301H1276L1291 287H1261Z" fill="#6e6e6a"/><path d="M1245.5 301H1276V331.5H1245.5Z" fill="#474943"/><path d="M1246 331V301H1276V331M1246 301L1261 287H1291V316M1276 301L1291 287" stroke="#92928c"/>
<path d="M691 346.5V316L706 302V331.5Z" fill="#42443e"/><path d="M661 316H691L706 302H676Z" fill="#6e6e6a"/><path d="M660.5 316H691V346.5H660.5Z" fill="#474943"/><path d="M661 346V316H691V346M661 316L676 302H706V331M691 316L706 302" stroke="#92928c"/>
<path d="M751 346.5V316L766 302V331.5Z" fill="#42443e"/><path d="M721 316H751L766 302H736Z" fill="#6e6e6a"/><path d="M720.5 316H751V346.5H720.5Z" fill="#474943"/><path d="M721 346V316H751V346M721 316L736 302H766V331M751 316L766 302" stroke="#92928c"/>
<path d="M1021 346.5V316L1036 302V331.5Z" fill="#42443e"/><path d="M991 316H1021L1036 302H1006Z" fill="#6e6e6a"/><path d="M990.5 316H1021V346.5H990.5Z" fill="#474943"/><path d="M991 346V316H1021V346M991 316L1006 302H1036V331M1021 316L1036 302" stroke="#92928c"/>
<path d="M1051 346.5V316L1066 302V331.5Z" fill="#42443e"/><path d="M1021 316H1051L1066 302H1036Z" fill="#6e6e6a"/><path d="M1020.5 316H1051V346.5H1020.5Z" fill="#474943"/><path d="M1021 346V316H1051V346M1021 316L1036 302H1066V331M1051 316L1066 302" stroke="#92928c"/>
<path d="M1111 346.5V316L1126 302V331.5Z" fill="#42443e"/><path d="M1081 316H1111L1126 302H1096Z" fill="#6e6e6a"/><path d="M1080.5 316H1111V346.5H1080.5Z" fill="#474943"/><path d="M1081 346V316H1111V346M1081 316L1096 302H1126V331M1111 316L1126 302" stroke="#92928c"/>
<path d="M1141 346.5V316L1156 302V331.5Z" fill="#42443e"/><path d="M1111 316H1141L1156 302H1126Z" fill="#6e6e6a"/><path d="M1110.5 316H1141V346.5H1110.5Z" fill="#474943"/><path d="M1111 346V316H1141V346M1111 316L1126 302H1156V331M1141 316L1156 302" stroke="#92928c"/>
<path d="M1201 346.5V316L1216 302V331.5Z" fill="#42443e"/><path d="M1171 316H1201L1216 302H1186Z" fill="#6e6e6a"/><path d="M1170.5 316H1201V346.5H1170.5Z" fill="#474943"/><path d="M1171 346V316H1201V346M1171 316L1186 302H1216V331M1201 316L1216 302" stroke="#92928c"/>
<path d="M1261 346.5V316L1276 302V331.5Z" fill="#42443e"/><path d="M1231 316H1261L1276 302H1246Z" fill="#6e6e6a"/><path d="M1230.5 316H1261V346.5H1230.5Z" fill="#474943"/><path d="M1231 346V316H1261V346M1231 316L1246 302H1276V331M1261 316L1276 302" stroke="#92928c"/>
<path d="M676 361.5V331L691 317V346.5Z" fill="#42443e"/><path d="M646 331H676L691 317H661Z" fill="#6e6e6a"/><path d="M645.5 331H676V361.5H645.5Z" fill="#474943"/><path d="M646 361V331H676V361M646 331L661 317H691V346M676 331L691 317" stroke="#92928c"/>
<path d="M766 361.5V331L781 317V346.5Z" fill="#42443e"/><path d="M736 331H766L781 317H751Z" fill="#6e6e6a"/><path d="M735.5 331H766V361.5H735.5Z" fill="#474943"/><path d="M736 361V331H766V361M736 331L751 317H781V346M766 331L781 317" stroke="#92928c"/>
<path d="M826 361.5V331L841 317V346.5Z" fill="#42443e"/><path d="M796 331H826L841 317H811Z" fill="#6e6e6a"/><path d="M795.5 331H826V361.5H795.5Z" fill="#474943"/><path d="M796 361V331H826V361M796 331L811 317H841V346M826 331L841 317" stroke="#92928c"/>
<path d="M856 361.5V331L871 317V346.5Z" fill="#42443e"/><path d="M826 331H856L871 317H841Z" fill="#6e6e6a"/><path d="M825.5 331H856V361.5H825.5Z" fill="#474943"/><path d="M826 361V331H856V361M826 331L841 317H871V346M856 331L871 317" stroke="#92928c"/>
<path d="M886 361.5V331L901 317V346.5Z" fill="#42443e"/><path d="M856 331H886L901 317H871Z" fill="#6e6e6a"/><path d="M855.5 331H886V361.5H855.5Z" fill="#474943"/><path d="M856 361V331H886V361M856 331L871 317H901V346M886 331L901 317" stroke="#92928c"/>
<path d="M946 361.5V331L961 317V346.5Z" fill="#42443e"/><path d="M916 331H946L961 317H931Z" fill="#6e6e6a"/><path d="M915.5 331H946V361.5H915.5Z" fill="#474943"/><path d="M916 361V331H946V361M916 331L931 317H961V346M946 331L961 317" stroke="#92928c"/>
<path d="M1036 361.5V331L1051 317V346.5Z" fill="#42443e"/><path d="M1006 331H1036L1051 317H1021Z" fill="#6e6e6a"/><path d="M1005.5 331H1036V361.5H1005.5Z" fill="#474943"/><path d="M1006 361V331H1036V361M1006 331L1021 317H1051V346M1036 331L1051 317" stroke="#92928c"/>
<path d="M1126 361.5V331L1141 317V346.5Z" fill="#42443e"/><path d="M1096 331H1126L1141 317H1111Z" fill="#6e6e6a"/><path d="M1095.5 331H1126V361.5H1095.5Z" fill="#474943"/><path d="M1096 361V331H1126V361M1096 331L1111 317H1141V346M1126 331L1141 317" stroke="#92928c"/>
<path d="M1186 361.5V331L1201 317V346.5Z" fill="#42443e"/><path d="M1156 331H1186L1201 317H1171Z" fill="#6e6e6a"/><path d="M1155.5 331H1186V361.5H1155.5Z" fill="#474943"/><path d="M1156 361V331H1186V361M1156 331L1171 317H1201V346M1186 331L1201 317" stroke="#92928c"/>
<path d="M1246 361.5V331L1261 317V346.5Z" fill="#42443e"/><path d="M1216 331H1246L1261 317H1231Z" fill="#6e6e6a"/><path d="M1215.5 331H1246V361.5H1215.5Z" fill="#474943"/><path d="M1216 361V331H1246V361M1216 331L1231 317H1261V346M1246 331L1261 317" stroke="#92928c"/>
<path d="M691 376.5V346L706 332V361.5Z" fill="#42443e"/><path d="M661 346H691L706 332H676Z" fill="#6e6e6a"/><path d="M660.5 346H691V376.5H660.5Z" fill="#474943"/><path d="M661 376V346H691V376M661 346L676 332H706V361M691 346L706 332" stroke="#92928c"/>
<path d="M811 376.5V346L826 332V361.5Z" fill="#42443e"/><path d="M781 346H811L826 332H796Z" fill="#6e6e6a"/><path d="M780.5 346H811V376.5H780.5Z" fill="#474943"/><path d="M781 376V346H811V376M781 346L796 332H826V361M811 346L826 332" stroke="#92928c"/>
<path d="M841 376.5V346L856 332V361.5Z" fill="#42443e"/><path d="M811 346H841L856 332H826Z" fill="#6e6e6a"/><path d="M810.5 346H841V376.5H810.5Z" fill="#474943"/><path d="M811 376V346H841V376M811 346L826 332H856V361M841 346L856 332" stroke="#92928c"/>
<path d="M871 376.5V346L886 332V361.5Z" fill="#42443e"/><path d="M841 346H871L886 332H856Z" fill="#6e6e6a"/><path d="M840.5 346H871V376.5H840.5Z" fill="#474943"/><path d="M841 376V346H871V376M841 346L856 332H886V361M871 346L886 332" stroke="#92928c"/>
<path d="M931 376.5V346L946 332V361.5Z" fill="#42443e"/><path d="M901 346H931L946 332H916Z" fill="#6e6e6a"/><path d="M900.5 346H931V376.5H900.5Z" fill="#474943"/><path d="M901 376V346H931V376M901 346L916 332H946V361M931 346L946 332" stroke="#92928c"/>
<path d="M961 376.5V346L976 332V361.5Z" fill="#42443e"/><path d="M931 346H961L976 332H946Z" fill="#6e6e6a"/><path d="M930.5 346H961V376.5H930.5Z" fill="#474943"/><path d="M931 376V346H961V376M931 346L946 332H976V361M961 346L976 332" stroke="#92928c"/>
<path d="M1021 376.5V346L1036 332V361.5Z" fill="#42443e"/><path d="M991 346H1021L1036 332H1006Z" fill="#6e6e6a"/><path d="M990.5 346H1021V376.5H990.5Z" fill="#474943"/><path d="M991 376V346H1021V376M991 346L1006 332H1036V361M1021 346L1036 332" stroke="#92928c"/>
<path d="M1051 376.5V346L1066 332V361.5Z" fill="#42443e"/><path d="M1021 346H1051L1066 332H1036Z" fill="#6e6e6a"/><path d="M1020.5 346H1051V376.5H1020.5Z" fill="#474943"/><path d="M1021 376V346H1051V376M1021 346L1036 332H1066V361M1051 346L1066 332" stroke="#92928c"/>
<path d="M1111 376.5V346L1126 332V361.5Z" fill="#42443e"/><path d="M1081 346H1111L1126 332H1096Z" fill="#6e6e6a"/><path d="M1080.5 346H1111V376.5H1080.5Z" fill="#474943"/><path d="M1081 376V346H1111V376M1081 346L1096 332H1126V361M1111 346L1126 332" stroke="#92928c"/>
<path d="M1231 376.5V346L1246 332V361.5Z" fill="#42443e"/><path d="M1201 346H1231L1246 332H1216Z" fill="#6e6e6a"/><path d="M1200.5 346H1231V376.5H1200.5Z" fill="#474943"/><path d="M1201 376V346H1231V376M1201 346L1216 332H1246V361M1231 346L1246 332" stroke="#92928c"/>
<path d="M676 391.5V361L691 347V376.5Z" fill="#42443e"/><path d="M646 361H676L691 347H661Z" fill="#6e6e6a"/><path d="M645.5 361H676V391.5H645.5Z" fill="#474943"/><path d="M646 391V361H676V391M646 361L661 347H691V376M676 361L691 347" stroke="#92928c"/>
<path d="M736 391.5V361L751 347V376.5Z" fill="#42443e"/><path d="M706 361H736L751 347H721Z" fill="#6e6e6a"/><path d="M705.5 361H736V391.5H705.5Z" fill="#474943"/><path d="M706 391V361H736V391M706 361L721 347H751V376M736 361L751 347" stroke="#92928c"/>
<path d="M796 391.5V361L811 347V376.5Z" fill="#42443e"/><path d="M766 361H796L811 347H781Z" fill="#6e6e6a"/><path d="M765.5 361H796V391.5H765.5Z" fill="#474943"/><path d="M766 391V361H796V391M766 361L781 347H811V376M796 361L811 347" stroke="#92928c"/>
<path d="M1096 391.5V361L1111 347V376.5Z" fill="#42443e"/><path d="M1066 361H1096L1111 347H1081Z" fill="#6e6e6a"/><path d="M1065.5 361H1096V391.5H1065.5Z" fill="#474943"/><path d="M1066 391V361H1096V391M1066 361L1081 347H1111V376M1096 361L1111 347" stroke="#92928c"/>
<path d="M1156 391.5V361L1171 347V376.5Z" fill="#42443e"/><path d="M1126 361H1156L1171 347H1141Z" fill="#6e6e6a"/><path d="M1125.5 361H1156V391.5H1125.5Z" fill="#474943"/><path d="M1126 391V361H1156V391M1126 361L1141 347H1171V376M1156 361L1171 347" stroke="#92928c"/>
<path d="M1216 391.5V361L1231 347V376.5Z" fill="#42443e"/><path d="M1186 361H1216L1231 347H1201Z" fill="#6e6e6a"/><path d="M1185.5 361H1216V391.5H1185.5Z" fill="#474943"/><path d="M1186 391V361H1216V391M1186 361L1201 347H1231V376M1216 361L1231 347" stroke="#92928c"/>
<path d="M721 406.5V376L736 362V391.5Z" fill="#42443e"/><path d="M691 376H721L736 362H706Z" fill="#6e6e6a"/><path d="M690.5 376H721V406.5H690.5Z" fill="#474943"/><path d="M691 406V376H721V406M691 376L706 362H736V391M721 376L736 362" stroke="#92928c"/>
<path d="M811 406.5V376L826 362V391.5Z" fill="#42443e"/><path d="M781 376H811L826 362H796Z" fill="#6e6e6a"/><path d="M780.5 376H811V406.5H780.5Z" fill="#474943"/><path d="M781 406V376H811V406M781 376L796 362H826V391M811 376L826 362" stroke="#92928c"/>
<path d="M841 406.5V376L856 362V391.5Z" fill="#42443e"/><path d="M811 376H841L856 362H826Z" fill="#6e6e6a"/><path d="M810.5 376H841V406.5H810.5Z" fill="#474943"/><path d="M811 406V376H841V406M811 376L826 362H856V391M841 376L856 362" stroke="#92928c"/>
<path d="M901 406.5V376L916 362V391.5Z" fill="#42443e"/><path d="M871 376H901L916 362H886Z" fill="#6e6e6a"/><path d="M870.5 376H901V406.5H870.5Z" fill="#474943"/><path d="M871 406V376H901V406M871 376L886 362H916V391M901 376L916 362" stroke="#92928c"/>
<path d="M991 406.5V376L1006 362V391.5Z" fill="#42443e"/><path d="M961 376H991L1006 362H976Z" fill="#6e6e6a"/><path d="M960.5 376H991V406.5H960.5Z" fill="#474943"/><path d="M961 406V376H991V406M961 376L976 362H1006V391M991 376L1006 362" stroke="#92928c"/>
<path d="M1051 406.5V376L1066 362V391.5Z" fill="#42443e"/><path d="M1021 376H1051L1066 362H1036Z" fill="#6e6e6a"/><path d="M1020.5 376H1051V406.5H1020.5Z" fill="#474943"/><path d="M1021 406V376H1051V406M1021 376L1036 362H1066V391M1051 376L1066 362" stroke="#92928c"/>
<path d="M1081 406.5V376L1096 362V391.5Z" fill="#42443e"/><path d="M1051 376H1081L1096 362H1066Z" fill="#6e6e6a"/><path d="M1050.5 376H1081V406.5H1050.5Z" fill="#474943"/><path d="M1051 406V376H1081V406M1051 376L1066 362H1096V391M1081 376L1096 362" stroke="#92928c"/>
<path d="M1141 406.5V376L1156 362V391.5Z" fill="#42443e"/><path d="M1111 376H1141L1156 362H1126Z" fill="#6e6e6a"/><path d="M1110.5 376H1141V406.5H1110.5Z" fill="#474943"/><path d="M1111 406V376H1141V406M1111 376L1126 362H1156V391M1141 376L1156 362" stroke="#92928c"/>
<path d="M1201 406.5V376L1216 362V391.5Z" fill="#42443e"/><path d="M1171 376H1201L1216 362H1186Z" fill="#6e6e6a"/><path d="M1170.5 376H1201V406.5H1170.5Z" fill="#474943"/><path d="M1171 406V376H1201V406M1171 376L1186 362H1216V391M1201 376L1216 362" stroke="#92928c"/>
<path d="M616 421.5V391L631 377V406.5Z" fill="#42443e"/><path d="M586 391H616L631 377H601Z" fill="#6e6e6a"/><path d="M585.5 391H616V421.5H585.5Z" fill="#474943"/><path d="M586 421V391H616V421M586 391L601 377H631V406M616 391L631 377" stroke="#92928c"/>
<path d="M646 421.5V391L661 377V406.5Z" fill="#42443e"/><path d="M616 391H646L661 377H631Z" fill="#6e6e6a"/><path d="M615.5 391H646V421.5H615.5Z" fill="#474943"/><path d="M616 421V391H646V421M616 391L631 377H661V406M646 391L661 377" stroke="#92928c"/>
<path d="M706 421.5V391L721 377V406.5Z" fill="#42443e"/><path d="M676 391H706L721 377H691Z" fill="#6e6e6a"/><path d="M675.5 391H706V421.5H675.5Z" fill="#474943"/><path d="M676 421V391H706V421M676 391L691 377H721V406M706 391L721 377" stroke="#92928c"/>
<path d="M736 421.5V391L751 377V406.5Z" fill="#42443e"/><path d="M706 391H736L751 377H721Z" fill="#6e6e6a"/><path d="M705.5 391H736V421.5H705.5Z" fill="#474943"/><path d="M706 421V391H736V421M706 391L721 377H751V406M736 391L751 377" stroke="#92928c"/>
<path d="M796 421.5V391L811 377V406.5Z" fill="#42443e"/><path d="M766 391H796L811 377H781Z" fill="#6e6e6a"/><path d="M765.5 391H796V421.5H765.5Z" fill="#474943"/><path d="M766 421V391H796V421M766 391L781 377H811V406M796 391L811 377" stroke="#92928c"/>
<path d="M916 421.5V391L931 377V406.5Z" fill="#42443e"/><path d="M886 391H916L931 377H901Z" fill="#6e6e6a"/><path d="M885.5 391H916V421.5H885.5Z" fill="#474943"/><path d="M886 421V391H916V421M886 391L901 377H931V406M916 391L931 377" stroke="#92928c"/>
<path d="M976 421.5V391L991 377V406.5Z" fill="#42443e"/><path d="M946 391H976L991 377H961Z" fill="#6e6e6a"/><path d="M945.5 391H976V421.5H945.5Z" fill="#474943"/><path d="M946 421V391H976V421M946 391L961 377H991V406M976 391L991 377" stroke="#92928c"/>
<path d="M1036 421.5V391L1051 377V406.5Z" fill="#42443e"/><path d="M1006 391H1036L1051 377H1021Z" fill="#6e6e6a"/><path d="M1005.5 391H1036V421.5H1005.5Z" fill="#474943"/><path d="M1006 421V391H1036V421M1006 391L1021 377H1051V406M1036 391L1051 377" stroke="#92928c"/>
<path d="M1066 421.5V391L1081 377V406.5Z" fill="#42443e"/><path d="M1036 391H1066L1081 377H1051Z" fill="#6e6e6a"/><path d="M1035.5 391H1066V421.5H1035.5Z" fill="#474943"/><path d="M1036 421V391H1066V421M1036 391L1051 377H1081V406M1066 391L1081 377" stroke="#92928c"/>
<path d="M1096 421.5V391L1111 377V406.5Z" fill="#42443e"/><path d="M1066 391H1096L1111 377H1081Z" fill="#6e6e6a"/><path d="M1065.5 391H1096V421.5H1065.5Z" fill="#474943"/><path d="M1066 421V391H1096V421M1066 391L1081 377H1111V406M1096 391L1111 377" stroke="#92928c"/>
<path d="M1126 421.5V391L1141 377V406.5Z" fill="#42443e"/><path d="M1096 391H1126L1141 377H1111Z" fill="#6e6e6a"/><path d="M1095.5 391H1126V421.5H1095.5Z" fill="#474943"/><path d="M1096 421V391H1126V421M1096 391L1111 377H1141V406M1126 391L1141 377" stroke="#92928c"/>
<path d="M1156 421.5V391L1171 377V406.5Z" fill="#42443e"/><path d="M1126 391H1156L1171 377H1141Z" fill="#6e6e6a"/><path d="M1125.5 391H1156V421.5H1125.5Z" fill="#474943"/><path d="M1126 421V391H1156V421M1126 391L1141 377H1171V406M1156 391L1171 377" stroke="#92928c"/>
<path d="M1186 421.5V391L1201 377V406.5Z" fill="#42443e"/><path d="M1156 391H1186L1201 377H1171Z" fill="#6e6e6a"/><path d="M1155.5 391H1186V421.5H1155.5Z" fill="#474943"/><path d="M1156 421V391H1186V421M1156 391L1171 377H1201V406M1186 391L1201 377" stroke="#92928c"/>
<path d="M601 436.5V406L616 392V421.5Z" fill="#42443e"/><path d="M571 406H601L616 392H586Z" fill="#6e6e6a"/><path d="M570.5 406H601V436.5H570.5Z" fill="#474943"/><path d="M571 436V406H601V436M571 406L586 392H616V421M601 406L616 392" stroke="#92928c"/>
<path d="M781 436.5V406L796 392V421.5Z" fill="#42443e"/><path d="M751 406H781L796 392H766Z" fill="#6e6e6a"/><path d="M750.5 406H781V436.5H750.5Z" fill="#474943"/><path d="M751 436V406H781V436M751 406L766 392H796V421M781 406L796 392" stroke="#92928c"/>
<path d="M841 436.5V406L856 392V421.5Z" fill="#42443e"/><path d="M811 406H841L856 392H826Z" fill="#6e6e6a"/><path d="M810.5 406H841V436.5H810.5Z" fill="#474943"/><path d="M811 436V406H841V436M811 406L826 392H856V421M841 406L856 392" stroke="#92928c"/>
<path d="M901 436.5V406L916 392V421.5Z" fill="#42443e"/><path d="M871 406H901L916 392H886Z" fill="#6e6e6a"/><path d="M870.5 406H901V436.5H870.5Z" fill="#474943"/><path d="M871 436V406H901V436M871 406L886 392H916V421M901 406L916 392" stroke="#92928c"/>
<path d="M961 436.5V406L976 392V421.5Z" fill="#42443e"/><path d="M931 406H961L976 392H946Z" fill="#6e6e6a"/><path d="M930.5 406H961V436.5H930.5Z" fill="#474943"/><path d="M931 436V406H961V436M931 406L946 392H976V421M961 406L976 392" stroke="#92928c"/>
<path d="M1171 436.5V406L1186 392V421.5Z" fill="#42443e"/><path d="M1141 406H1171L1186 392H1156Z" fill="#6e6e6a"/><path d="M1140.5 406H1171V436.5H1140.5Z" fill="#474943"/><path d="M1141 436V406H1171V436M1141 406L1156 392H1186V421M1171 406L1186 392" stroke="#92928c"/>
<path d="M586 451.5V421L601 407V436.5Z" fill="#42443e"/><path d="M556 421H586L601 407H571Z" fill="#6e6e6a"/><path d="M555.5 421H586V451.5H555.5Z" fill="#474943"/><path d="M556 451V421H586V451M556 421L571 407H601V436M586 421L601 407" stroke="#92928c"/>
<path d="M646 451.5V421L661 407V436.5Z" fill="#42443e"/><path d="M616 421H646L661 407H631Z" fill="#6e6e6a"/><path d="M615.5 421H646V451.5H615.5Z" fill="#474943"/><path d="M616 451V421H646V451M616 421L631 407H661V436M646 421L661 407" stroke="#92928c"/>
<path d="M706 451.5V421L721 407V436.5Z" fill="#42443e"/><path d="M676 421H706L721 407H691Z" fill="#6e6e6a"/><path d="M675.5 421H706V451.5H675.5Z" fill="#474943"/><path d="M676 451V421H706V451M676 421L691 407H721V436M706 421L721 407" stroke="#92928c"/>
<path d="M766 451.5V421L781 407V436.5Z" fill="#42443e"/><path d="M736 421H766L781 407H751Z" fill="#6e6e6a"/><path d="M735.5 421H766V451.5H735.5Z" fill="#474943"/><path d="M736 451V421H766V451M736 421L751 407H781V436M766 421L781 407" stroke="#92928c"/>
<path d="M796 451.5V421L811 407V436.5Z" fill="#42443e"/><path d="M766 421H796L811 407H781Z" fill="#6e6e6a"/><path d="M765.5 421H796V451.5H765.5Z" fill="#474943"/><path d="M766 451V421H796V451M766 421L781 407H811V436M796 421L811 407" stroke="#92928c"/>
<path d="M826 451.5V421L841 407V436.5Z" fill="#42443e"/><path d="M796 421H826L841 407H811Z" fill="#6e6e6a"/><path d="M795.5 421H826V451.5H795.5Z" fill="#474943"/><path d="M796 451V421H826V451M796 421L811 407H841V436M826 421L841 407" stroke="#92928c"/>
<path d="M886 451.5V421L901 407V436.5Z" fill="#42443e"/><path d="M856 421H886L901 407H871Z" fill="#6e6e6a"/><path d="M855.5 421H886V451.5H855.5Z" fill="#474943"/><path d="M856 451V421H886V451M856 421L871 407H901V436M886 421L901 407" stroke="#92928c"/>
<path d="M916 451.5V421L931 407V436.5Z" fill="#42443e"/><path d="M886 421H916L931 407H901Z" fill="#6e6e6a"/><path d="M885.5 421H916V451.5H885.5Z" fill="#474943"/><path d="M886 451V421H916V451M886 421L901 407H931V436M916 421L931 407" stroke="#92928c"/>
<path d="M946 451.5V421L961 407V436.5Z" fill="#42443e"/><path d="M916 421H946L961 407H931Z" fill="#6e6e6a"/><path d="M915.5 421H946V451.5H915.5Z" fill="#474943"/><path d="M916 451V421H946V451M916 421L931 407H961V436M946 421L961 407" stroke="#92928c"/>
<path d="M976 451.5V421L991 407V436.5Z" fill="#42443e"/><path d="M946 421H976L991 407H961Z" fill="#6e6e6a"/><path d="M945.5 421H976V451.5H945.5Z" fill="#474943"/><path d="M946 451V421H976V451M946 421L961 407H991V436M976 421L991 407" stroke="#92928c"/>
<path d="M1006 451.5V421L1021 407V436.5Z" fill="#42443e"/><path d="M976 421H1006L1021 407H991Z" fill="#6e6e6a"/><path d="M975.5 421H1006V451.5H975.5Z" fill="#474943"/><path d="M976 451V421H1006V451M976 421L991 407H1021V436M1006 421L1021 407" stroke="#92928c"/>
<path d="M1036 451.5V421L1051 407V436.5Z" fill="#42443e"/><path d="M1006 421H1036L1051 407H1021Z" fill="#6e6e6a"/><path d="M1005.5 421H1036V451.5H1005.5Z" fill="#474943"/><path d="M1006 451V421H1036V451M1006 421L1021 407H1051V436M1036 421L1051 407" stroke="#92928c"/>
<path d="M1096 451.5V421L1111 407V436.5Z" fill="#42443e"/><path d="M1066 421H1096L1111 407H1081Z" fill="#6e6e6a"/><path d="M1065.5 421H1096V451.5H1065.5Z" fill="#474943"/><path d="M1066 451V421H1096V451M1066 421L1081 407H1111V436M1096 421L1111 407" stroke="#92928c"/>
<path d="M1156 451.5V421L1171 407V436.5Z" fill="#42443e"/><path d="M1126 421H1156L1171 407H1141Z" fill="#6e6e6a"/><path d="M1125.5 421H1156V451.5H1125.5Z" fill="#474943"/><path d="M1126 451V421H1156V451M1126 421L1141 407H1171V436M1156 421L1171 407" stroke="#92928c"/>
<path d="M571 466.5V436L586 422V451.5Z" fill="#42443e"/><path d="M541 436H571L586 422H556Z" fill="#6e6e6a"/><path d="M540.5 436H571V466.5H540.5Z" fill="#474943"/><path d="M541 466V436H571V466M541 436L556 422H586V451M571 436L586 422" stroke="#92928c"/>
<path d="M631 466.5V436L646 422V451.5Z" fill="#42443e"/><path d="M601 436H631L646 422H616Z" fill="#6e6e6a"/><path d="M600.5 436H631V466.5H600.5Z" fill="#474943"/><path d="M601 466V436H631V466M601 436L616 422H646V451M631 436L646 422" stroke="#92928c"/>
<path d="M691 466.5V436L706 422V451.5Z" fill="#42443e"/><path d="M661 436H691L706 422H676Z" fill="#6e6e6a"/><path d="M660.5 436H691V466.5H660.5Z" fill="#474943"/><path d="M661 466V436H691V466M661 436L676 422H706V451M691 436L706 422" stroke="#92928c"/>
<path d="M811 466.5V436L826 422V451.5Z" fill="#42443e"/><path d="M781 436H811L826 422H796Z" fill="#6e6e6a"/><path d="M780.5 436H811V466.5H780.5Z" fill="#474943"/><path d="M781 466V436H811V466M781 436L796 422H826V451M811 436L826 422" stroke="#92928c"/>
<path d="M901 466.5V436L916 422V451.5Z" fill="#42443e"/><path d="M871 436H901L916 422H886Z" fill="#6e6e6a"/><path d="M870.5 436H901V466.5H870.5Z" fill="#474943"/><path d="M871 466V436H901V466M871 436L886 422H916V451M901 436L916 422" stroke="#92928c"/>
<path d="M1021 466.5V436L1036 422V451.5Z" fill="#42443e"/><path d="M991 436H1021L1036 422H1006Z" fill="#6e6e6a"/><path d="M990.5 436H1021V466.5H990.5Z" fill="#474943"/><path d="M991 466V436H1021V466M991 436L1006 422H1036V451M1021 436L1036 422" stroke="#92928c"/>
<path d="M1141 466.5V436L1156 422V451.5Z" fill="#42443e"/><path d="M1111 436H1141L1156 422H1126Z" fill="#6e6e6a"/><path d="M1110.5 436H1141V466.5H1110.5Z" fill="#474943"/><path d="M1111 466V436H1141V466M1111 436L1126 422H1156V451M1141 436L1156 422" stroke="#92928c"/>
<path d="M556 481.5V451L571 437V466.5Z" fill="#42443e"/><path d="M526 451H556L571 437H541Z" fill="#6e6e6a"/><path d="M525.5 451H556V481.5H525.5Z" fill="#474943"/><path d="M526 481V451H556V481M526 451L541 437H571V466M556 451L571 437" stroke="#92928c"/>
<path d="M586 481.5V451L601 437V466.5Z" fill="#42443e"/><path d="M556 451H586L601 437H571Z" fill="#6e6e6a"/><path d="M555.5 451H586V481.5H555.5Z" fill="#474943"/><path d="M556 481V451H586V481M556 451L571 437H601V466M586 451L601 437" stroke="#92928c"/>
<path d="M616 481.5V451L631 437V466.5Z" fill="#42443e"/><path d="M586 451H616L631 437H601Z" fill="#6e6e6a"/><path d="M585.5 451H616V481.5H585.5Z" fill="#474943"/><path d="M586 481V451H616V481M586 451L601 437H631V466M616 451L631 437" stroke="#92928c"/>
<path d="M676 481.5V451L691 437V466.5Z" fill="#42443e"/><path d="M646 451H676L691 437H661Z" fill="#6e6e6a"/><path d="M645.5 451H676V481.5H645.5Z" fill="#474943"/><path d="M646 481V451H676V481M646 451L661 437H691V466M676 451L691 437" stroke="#92928c"/>
<path d="M736 481.5V451L751 437V466.5Z" fill="#42443e"/><path d="M706 451H736L751 437H721Z" fill="#6e6e6a"/><path d="M705.5 451H736V481.5H705.5Z" fill="#474943"/><path d="M706 481V451H736V481M706 451L721 437H751V466M736 451L751 437" stroke="#92928c"/>
<path d="M766 481.5V451L781 437V466.5Z" fill="#42443e"/><path d="M736 451H766L781 437H751Z" fill="#6e6e6a"/><path d="M735.5 451H766V481.5H735.5Z" fill="#474943"/><path d="M736 481V451H766V481M736 451L751 437H781V466M766 451L781 437" stroke="#92928c"/>
<path d="M796 481.5V451L811 437V466.5Z" fill="#42443e"/><path d="M766 451H796L811 437H781Z" fill="#6e6e6a"/><path d="M765.5 451H796V481.5H765.5Z" fill="#474943"/><path d="M766 481V451H796V481M766 451L781 437H811V466M796 451L811 437" stroke="#92928c"/>
<path d="M856 481.5V451L871 437V466.5Z" fill="#42443e"/><path d="M826 451H856L871 437H841Z" fill="#6e6e6a"/><path d="M825.5 451H856V481.5H825.5Z" fill="#474943"/><path d="M826 481V451H856V481M826 451L841 437H871V466M856 451L871 437" stroke="#92928c"/>
<path d="M886 481.5V451L901 437V466.5Z" fill="#42443e"/><path d="M856 451H886L901 437H871Z" fill="#6e6e6a"/><path d="M855.5 451H886V481.5H855.5Z" fill="#474943"/><path d="M856 481V451H886V481M856 451L871 437H901V466M886 451L901 437" stroke="#92928c"/>
<path d="M946 481.5V451L961 437V466.5Z" fill="#42443e"/><path d="M916 451H946L961 437H931Z" fill="#6e6e6a"/><path d="M915.5 451H946V481.5H915.5Z" fill="#474943"/><path d="M916 481V451H946V481M916 451L931 437H961V466M946 451L961 437" stroke="#92928c"/>
<path d="M1006 481.5V451L1021 437V466.5Z" fill="#42443e"/><path d="M976 451H1006L1021 437H991Z" fill="#6e6e6a"/><path d="M975.5 451H1006V481.5H975.5Z" fill="#474943"/><path d="M976 481V451H1006V481M976 451L991 437H1021V466M1006 451L1021 437" stroke="#92928c"/>
<path d="M1036 481.5V451L1051 437V466.5Z" fill="#42443e"/><path d="M1006 451H1036L1051 437H1021Z" fill="#6e6e6a"/><path d="M1005.5 451H1036V481.5H1005.5Z" fill="#474943"/><path d="M1006 481V451H1036V481M1006 451L1021 437H1051V466M1036 451L1051 437" stroke="#92928c"/>
<path d="M1066 481.5V451L1081 437V466.5Z" fill="#42443e"/><path d="M1036 451H1066L1081 437H1051Z" fill="#6e6e6a"/><path d="M1035.5 451H1066V481.5H1035.5Z" fill="#474943"/><path d="M1036 481V451H1066V481M1036 451L1051 437H1081V466M1066 451L1081 437" stroke="#92928c"/>
<path d="M1126 481.5V451L1141 437V466.5Z" fill="#42443e"/><path d="M1096 451H1126L1141 437H1111Z" fill="#6e6e6a"/><path d="M1095.5 451H1126V481.5H1095.5Z" fill="#474943"/><path d="M1096 481V451H1126V481M1096 451L1111 437H1141V466M1126 451L1141 437" stroke="#92928c"/>
<path d="M571 496.5V466L586 452V481.5Z" fill="#42443e"/><path d="M541 466H571L586 452H556Z" fill="#6e6e6a"/><path d="M540.5 466H571V496.5H540.5Z" fill="#474943"/><path d="M541 496V466H571V496M541 466L556 452H586V481M571 466L586 452" stroke="#92928c"/>
<path d="M661 496.5V466L676 452V481.5Z" fill="#42443e"/><path d="M631 466H661L676 452H646Z" fill="#6e6e6a"/><path d="M630.5 466H661V496.5H630.5Z" fill="#474943"/><path d="M631 496V466H661V496M631 466L646 452H676V481M661 466L676 452" stroke="#92928c"/>
<path d="M721 496.5V466L736 452V481.5Z" fill="#42443e"/><path d="M691 466H721L736 452H706Z" fill="#6e6e6a"/><path d="M690.5 466H721V496.5H690.5Z" fill="#474943"/><path d="M691 496V466H721V496M691 466L706 452H736V481M721 466L736 452" stroke="#92928c"/>
<path d="M841 496.5V466L856 452V481.5Z" fill="#42443e"/><path d="M811 466H841L856 452H826Z" fill="#6e6e6a"/><path d="M810.5 466H841V496.5H810.5Z" fill="#474943"/><path d="M811 496V466H841V496M811 466L826 452H856V481M841 466L856 452" stroke="#92928c"/>
<path d="M931 496.5V466L946 452V481.5Z" fill="#42443e"/><path d="M901 466H931L946 452H916Z" fill="#6e6e6a"/><path d="M900.5 466H931V496.5H900.5Z" fill="#474943"/><path d="M901 496V466H931V496M901 466L916 452H946V481M931 466L946 452" stroke="#92928c"/>
<path d="M1051 496.5V466L1066 452V481.5Z" fill="#42443e"/><path d="M1021 466H1051L1066 452H1036Z" fill="#6e6e6a"/><path d="M1020.5 466H1051V496.5H1020.5Z" fill="#474943"/><path d="M1021 496V466H1051V496M1021 466L1036 452H1066V481M1051 466L1066 452" stroke="#92928c"/>
<path d="M1111 496.5V466L1126 452V481.5Z" fill="#42443e"/><path d="M1081 466H1111L1126 452H1096Z" fill="#6e6e6a"/><path d="M1080.5 466H1111V496.5H1080.5Z" fill="#474943"/><path d="M1081 496V466H1111V496M1081 466L1096 452H1126V481M1111 466L1126 452" stroke="#92928c"/>
<path d="M556 511.5V481L571 467V496.5Z" fill="#42443e"/><path d="M526 481H556L571 467H541Z" fill="#6e6e6a"/><path d="M525.5 481H556V511.5H525.5Z" fill="#474943"/><path d="M526 511V481H556V511M526 481L541 467H571V496M556 481L571 467" stroke="#92928c"/>
<path d="M616 511.5V481L631 467V496.5Z" fill="#42443e"/><path d="M586 481H616L631 467H601Z" fill="#6e6e6a"/><path d="M585.5 481H616V511.5H585.5Z" fill="#474943"/><path d="M586 511V481H616V511M586 481L601 467H631V496M616 481L631 467" stroke="#92928c"/>
<path d="M706 511.5V481L721 467V496.5Z" fill="#42443e"/><path d="M676 481H706L721 467H691Z" fill="#6e6e6a"/><path d="M675.5 481H706V511.5H675.5Z" fill="#474943"/><path d="M676 511V481H706V511M676 481L691 467H721V496M706 481L721 467" stroke="#92928c"/>
<path d="M766 511.5V481L781 467V496.5Z" fill="#42443e"/><path d="M736 481H766L781 467H751Z" fill="#6e6e6a"/><path d="M735.5 481H766V511.5H735.5Z" fill="#474943"/><path d="M736 511V481H766V511M736 481L751 467H781V496M766 481L781 467" stroke="#92928c"/>
<path d="M796 511.5V481L811 467V496.5Z" fill="#42443e"/><path d="M766 481H796L811 467H781Z" fill="#6e6e6a"/><path d="M765.5 481H796V511.5H765.5Z" fill="#474943"/><path d="M766 511V481H796V511M766 481L781 467H811V496M796 481L811 467" stroke="#92928c"/>
<path d="M826 511.5V481L841 467V496.5Z" fill="#42443e"/><path d="M796 481H826L841 467H811Z" fill="#6e6e6a"/><path d="M795.5 481H826V511.5H795.5Z" fill="#474943"/><path d="M796 511V481H826V511M796 481L811 467H841V496M826 481L841 467" stroke="#92928c"/>
<path d="M886 511.5V481L901 467V496.5Z" fill="#42443e"/><path d="M856 481H886L901 467H871Z" fill="#6e6e6a"/><path d="M855.5 481H886V511.5H855.5Z" fill="#474943"/><path d="M856 511V481H886V511M856 481L871 467H901V496M886 481L901 467" stroke="#92928c"/>
<path d="M916 511.5V481L931 467V496.5Z" fill="#42443e"/><path d="M886 481H916L931 467H901Z" fill="#6e6e6a"/><path d="M885.5 481H916V511.5H885.5Z" fill="#474943"/><path d="M886 511V481H916V511M886 481L901 467H931V496M916 481L931 467" stroke="#92928c"/>
<path d="M946 511.5V481L961 467V496.5Z" fill="#42443e"/><path d="M916 481H946L961 467H931Z" fill="#6e6e6a"/><path d="M915.5 481H946V511.5H915.5Z" fill="#474943"/><path d="M916 511V481H946V511M916 481L931 467H961V496M946 481L961 467" stroke="#92928c"/>
<path d="M976 511.5V481L991 467V496.5Z" fill="#42443e"/><path d="M946 481H976L991 467H961Z" fill="#6e6e6a"/><path d="M945.5 481H976V511.5H945.5Z" fill="#474943"/><path d="M946 511V481H976V511M946 481L961 467H991V496M976 481L991 467" stroke="#92928c"/>
<path d="M1006 511.5V481L1021 467V496.5Z" fill="#42443e"/><path d="M976 481H1006L1021 467H991Z" fill="#6e6e6a"/><path d="M975.5 481H1006V511.5H975.5Z" fill="#474943"/><path d="M976 511V481H1006V511M976 481L991 467H1021V496M1006 481L1021 467" stroke="#92928c"/>
<path d="M1066 511.5V481L1081 467V496.5Z" fill="#42443e"/><path d="M1036 481H1066L1081 467H1051Z" fill="#6e6e6a"/><path d="M1035.5 481H1066V511.5H1035.5Z" fill="#474943"/><path d="M1036 511V481H1066V511M1036 481L1051 467H1081V496M1066 481L1081 467" stroke="#92928c"/>
<path d="M1096 511.5V481L1111 467V496.5Z" fill="#42443e"/><path d="M1066 481H1096L1111 467H1081Z" fill="#6e6e6a"/><path d="M1065.5 481H1096V511.5H1065.5Z" fill="#474943"/><path d="M1066 511V481H1096V511M1066 481L1081 467H1111V496M1096 481L1111 467" stroke="#92928c"/>
<path d="M541 526.5V496L556 482V511.5Z" fill="#42443e"/><path d="M511 496H541L556 482H526Z" fill="#6e6e6a"/><path d="M510.5 496H541V526.5H510.5Z" fill="#474943"/><path d="M511 526V496H541V526M511 496L526 482H556V511M541 496L556 482" stroke="#92928c"/>
<path d="M601 526.5V496L616 482V511.5Z" fill="#42443e"/><path d="M571 496H601L616 482H586Z" fill="#6e6e6a"/><path d="M570.5 496H601V526.5H570.5Z" fill="#474943"/><path d="M571 526V496H601V526M571 496L586 482H616V511M601 496L616 482" stroke="#92928c"/>
<path d="M661 526.5V496L676 482V511.5Z" fill="#42443e"/><path d="M631 496H661L676 482H646Z" fill="#6e6e6a"/><path d="M630.5 496H661V526.5H630.5Z" fill="#474943"/><path d="M631 526V496H661V526M631 496L646 482H676V511M661 496L676 482" stroke="#92928c"/>
<path d="M691 526.5V496L706 482V511.5Z" fill="#42443e"/><path d="M661 496H691L706 482H676Z" fill="#6e6e6a"/><path d="M660.5 496H691V526.5H660.5Z" fill="#474943"/><path d="M661 526V496H691V526M661 496L676 482H706V511M691 496L706 482" stroke="#92928c"/>
<path d="M811 526.5V496L826 482V511.5Z" fill="#42443e"/><path d="M781 496H811L826 482H796Z" fill="#6e6e6a"/><path d="M780.5 496H811V526.5H780.5Z" fill="#474943"/><path d="M781 526V496H811V526M781 496L796 482H826V511M811 496L826 482" stroke="#92928c"/>
<path d="M871 526.5V496L886 482V511.5Z" fill="#42443e"/><path d="M841 496H871L886 482H856Z" fill="#6e6e6a"/><path d="M840.5 496H871V526.5H840.5Z" fill="#474943"/><path d="M841 526V496H871V526M841 496L856 482H886V511M871 496L886 482" stroke="#92928c"/>
<path d="M1081 526.5V496L1096 482V511.5Z" fill="#42443e"/><path d="M1051 496H1081L1096 482H1066Z" fill="#6e6e6a"/><path d="M1050.5 496H1081V526.5H1050.5Z" fill="#474943"/><path d="M1051 526V496H1081V526M1051 496L1066 482H1096V511M1081 496L1096 482" stroke="#92928c"/>
<path d="M526 541.5V511L541 497V526.5Z" fill="#42443e"/><path d="M496 511H526L541 497H511Z" fill="#6e6e6a"/><path d="M495.5 511H526V541.5H495.5Z" fill="#474943"/><path d="M496 541V511H526V541M496 511L511 497H541V526M526 511L541 497" stroke="#92928c"/>
<path d="M646 541.5V511L661 497V526.5Z" fill="#42443e"/><path d="M616 511H646L661 497H631Z" fill="#6e6e6a"/><path d="M615.5 511H646V541.5H615.5Z" fill="#474943"/><path d="M616 541V511H646V541M616 511L631 497H661V526M646 511L661 497" stroke="#92928c"/>
<path d="M676 541.5V511L691 497V526.5Z" fill="#42443e"/><path d="M646 511H676L691 497H661Z" fill="#6e6e6a"/><path d="M645.5 511H676V541.5H645.5Z" fill="#474943"/><path d="M646 541V511H676V541M646 511L661 497H691V526M676 511L691 497" stroke="#92928c"/>
<path d="M706 541.5V511L721 497V526.5Z" fill="#42443e"/><path d="M676 511H706L721 497H691Z" fill="#6e6e6a"/><path d="M675.5 511H706V541.5H675.5Z" fill="#474943"/><path d="M676 541V511H706V541M676 511L691 497H721V526M706 511L721 497" stroke="#92928c"/>
<path d="M736 541.5V511L751 497V526.5Z" fill="#42443e"/><path d="M706 511H736L751 497H721Z" fill="#6e6e6a"/><path d="M705.5 511H736V541.5H705.5Z" fill="#474943"/><path d="M706 541V511H736V541M706 511L721 497H751V526M736 511L751 497" stroke="#92928c"/>
<path d="M856 541.5V511L871 497V526.5Z" fill="#42443e"/><path d="M826 511H856L871 497H841Z" fill="#6e6e6a"/><path d="M825.5 511H856V541.5H825.5Z" fill="#474943"/><path d="M826 541V511H856V541M826 511L841 497H871V526M856 511L871 497" stroke="#92928c"/>
<path d="M916 541.5V511L931 497V526.5Z" fill="#42443e"/><path d="M886 511H916L931 497H901Z" fill="#6e6e6a"/><path d="M885.5 511H916V541.5H885.5Z" fill="#474943"/><path d="M886 541V511H916V541M886 511L901 497H931V526M916 511L931 497" stroke="#92928c"/>
<path d="M946 541.5V511L961 497V526.5Z" fill="#42443e"/><path d="M916 511H946L961 497H931Z" fill="#6e6e6a"/><path d="M915.5 511H946V541.5H915.5Z" fill="#474943"/><path d="M916 541V511H946V541M916 511L931 497H961V526M946 511L961 497" stroke="#92928c"/>
<path d="M976 541.5V511L991 497V526.5Z" fill="#42443e"/><path d="M946 511H976L991 497H961Z" fill="#6e6e6a"/><path d="M945.5 511H976V541.5H945.5Z" fill="#474943"/><path d="M946 541V511H976V541M946 511L961 497H991V526M976 511L991 497" stroke="#92928c"/>
<path d="M1006 541.5V511L1021 497V526.5Z" fill="#42443e"/><path d="M976 511H1006L1021 497H991Z" fill="#6e6e6a"/><path d="M975.5 511H1006V541.5H975.5Z" fill="#474943"/><path d="M976 541V511H1006V541M976 511L991 497H1021V526M1006 511L1021 497" stroke="#92928c"/>
<path d="M1036 541.5V511L1051 497V526.5Z" fill="#42443e"/><path d="M1006 511H1036L1051 497H1021Z" fill="#6e6e6a"/><path d="M1005.5 511H1036V541.5H1005.5Z" fill="#474943"/><path d="M1006 541V511H1036V541M1006 511L1021 497H1051V526M1036 511L1051 497" stroke="#92928c"/>
<path d="M1066 541.5V511L1081 497V526.5Z" fill="#42443e"/><path d="M1036 511H1066L1081 497H1051Z" fill="#6e6e6a"/><path d="M1035.5 511H1066V541.5H1035.5Z" fill="#474943"/><path d="M1036 541V511H1066V541M1036 511L1051 497H1081V526M1066 511L1081 497" stroke="#92928c"/>
<path d="M511 556.5V526L526 512V541.5Z" fill="#42443e"/><path d="M481 526H511L526 512H496Z" fill="#6e6e6a"/><path d="M480.5 526H511V556.5H480.5Z" fill="#474943"/><path d="M481 556V526H511V556M481 526L496 512H526V541M511 526L526 512" stroke="#92928c"/>
<path d="M571 556.5V526L586 512V541.5Z" fill="#42443e"/><path d="M541 526H571L586 512H556Z" fill="#6e6e6a"/><path d="M540.5 526H571V556.5H540.5Z" fill="#474943"/><path d="M541 556V526H571V556M541 526L556 512H586V541M571 526L586 512" stroke="#92928c"/>
<path d="M721 556.5V526L736 512V541.5Z" fill="#42443e"/><path d="M691 526H721L736 512H706Z" fill="#6e6e6a"/><path d="M690.5 526H721V556.5H690.5Z" fill="#474943"/><path d="M691 556V526H721V556M691 526L706 512H736V541M721 526L736 512" stroke="#92928c"/>
<path d="M781 556.5V526L796 512V541.5Z" fill="#42443e"/><path d="M751 526H781L796 512H766Z" fill="#6e6e6a"/><path d="M750.5 526H781V556.5H750.5Z" fill="#474943"/><path d="M751 556V526H781V556M751 526L766 512H796V541M781 526L796 512" stroke="#92928c"/>
<path d="M841 556.5V526L856 512V541.5Z" fill="#42443e"/><path d="M811 526H841L856 512H826Z" fill="#6e6e6a"/><path d="M810.5 526H841V556.5H810.5Z" fill="#474943"/><path d="M811 556V526H841V556M811 526L826 512H856V541M841 526L856 512" stroke="#92928c"/>
<path d="M901 556.5V526L916 512V541.5Z" fill="#42443e"/><path d="M871 526H901L916 512H886Z" fill="#6e6e6a"/><path d="M870.5 526H901V556.5H870.5Z" fill="#474943"/><path d="M871 556V526H901V556M871 526L886 512H916V541M901 526L916 512" stroke="#92928c"/>
<path d="M931 556.5V526L946 512V541.5Z" fill="#42443e"/><path d="M901 526H931L946 512H916Z" fill="#6e6e6a"/><path d="M900.5 526H931V556.5H900.5Z" fill="#474943"/><path d="M901 556V526H931V556M901 526L916 512H946V541M931 526L946 512" stroke="#92928c"/>
<path d="M961 556.5V526L976 512V541.5Z" fill="#42443e"/><path d="M931 526H961L976 512H946Z" fill="#6e6e6a"/><path d="M930.5 526H961V556.5H930.5Z" fill="#474943"/><path d="M931 556V526H961V556M931 526L946 512H976V541M961 526L976 512" stroke="#92928c"/>
<path d="M991 556.5V526L1006 512V541.5Z" fill="#42443e"/><path d="M961 526H991L1006 512H976Z" fill="#6e6e6a"/><path d="M960.5 526H991V556.5H960.5Z" fill="#474943"/><path d="M961 556V526H991V556M961 526L976 512H1006V541M991 526L1006 512" stroke="#92928c"/>
<path d="M1021 556.5V526L1036 512V541.5Z" fill="#42443e"/><path d="M991 526H1021L1036 512H1006Z" fill="#6e6e6a"/><path d="M990.5 526H1021V556.5H990.5Z" fill="#474943"/><path d="M991 556V526H1021V556M991 526L1006 512H1036V541M1021 526L1036 512" stroke="#92928c"/>
<path d="M1051 556.5V526L1066 512V541.5Z" fill="#42443e"/><path d="M1021 526H1051L1066 512H1036Z" fill="#6e6e6a"/><path d="M1020.5 526H1051V556.5H1020.5Z" fill="#474943"/><path d="M1021 556V526H1051V556M1021 526L1036 512H1066V541M1051 526L1066 512" stroke="#92928c"/>
<path d="M556 571.5V541L571 527V556.5Z" fill="#42443e"/><path d="M526 541H556L571 527H541Z" fill="#6e6e6a"/><path d="M525.5 541H556V571.5H525.5Z" fill="#474943"/><path d="M526 571V541H556V571M526 541L541 527H571V556M556 541L571 527" stroke="#92928c"/>
<path d="M616 571.5V541L631 527V556.5Z" fill="#42443e"/><path d="M586 541H616L631 527H601Z" fill="#6e6e6a"/><path d="M585.5 541H616V571.5H585.5Z" fill="#474943"/><path d="M586 571V541H616V571M586 541L601 527H631V556M616 541L631 527" stroke="#92928c"/>
<path d="M646 571.5V541L661 527V556.5Z" fill="#42443e"/><path d="M616 541H646L661 527H631Z" fill="#6e6e6a"/><path d="M615.5 541H646V571.5H615.5Z" fill="#474943"/><path d="M616 571V541H646V571M616 541L631 527H661V556M646 541L661 527" stroke="#92928c"/>
<path d="M706 571.5V541L721 527V556.5Z" fill="#42443e"/><path d="M676 541H706L721 527H691Z" fill="#6e6e6a"/><path d="M675.5 541H706V571.5H675.5Z" fill="#474943"/><path d="M676 571V541H706V571M676 541L691 527H721V556M706 541L721 527" stroke="#92928c"/>
<path d="M736 571.5V541L751 527V556.5Z" fill="#42443e"/><path d="M706 541H736L751 527H721Z" fill="#6e6e6a"/><path d="M705.5 541H736V571.5H705.5Z" fill="#474943"/><path d="M706 571V541H736V571M706 541L721 527H751V556M736 541L751 527" stroke="#92928c"/>
<path d="M766 571.5V541L781 527V556.5Z" fill="#42443e"/><path d="M736 541H766L781 527H751Z" fill="#6e6e6a"/><path d="M735.5 541H766V571.5H735.5Z" fill="#474943"/><path d="M736 571V541H766V571M736 541L751 527H781V556M766 541L781 527" stroke="#92928c"/>
<path d="M886 571.5V541L901 527V556.5Z" fill="#42443e"/><path d="M856 541H886L901 527H871Z" fill="#6e6e6a"/><path d="M855.5 541H886V571.5H855.5Z" fill="#474943"/><path d="M856 571V541H886V571M856 541L871 527H901V556M886 541L901 527" stroke="#92928c"/>
<path d="M916 571.5V541L931 527V556.5Z" fill="#42443e"/><path d="M886 541H916L931 527H901Z" fill="#6e6e6a"/><path d="M885.5 541H916V571.5H885.5Z" fill="#474943"/><path d="M886 571V541H916V571M886 541L901 527H931V556M916 541L931 527" stroke="#92928c"/>
<path d="M481 586.5V556L496 542V571.5Z" fill="#42443e"/><path d="M451 556H481L496 542H466Z" fill="#6e6e6a"/><path d="M450.5 556H481V586.5H450.5Z" fill="#474943"/><path d="M451 586V556H481V586M451 556L466 542H496V571M481 556L496 542" stroke="#92928c"/>
<path d="M541 586.5V556L556 542V571.5Z" fill="#42443e"/><path d="M511 556H541L556 542H526Z" fill="#6e6e6a"/><path d="M510.5 556H541V586.5H510.5Z" fill="#474943"/><path d="M511 586V556H541V586M511 556L526 542H556V571M541 556L556 542" stroke="#92928c"/>
<path d="M751 586.5V556L766 542V571.5Z" fill="#42443e"/><path d="M721 556H751L766 542H736Z" fill="#6e6e6a"/><path d="M720.5 556H751V586.5H720.5Z" fill="#474943"/><path d="M721 586V556H751V586M721 556L736 542H766V571M751 556L766 542" stroke="#92928c"/>
<path d="M811 586.5V556L826 542V571.5Z" fill="#42443e"/><path d="M781 556H811L826 542H796Z" fill="#6e6e6a"/><path d="M780.5 556H811V586.5H780.5Z" fill="#474943"/><path d="M781 586V556H811V586M781 556L796 542H826V571M811 556L826 542" stroke="#92928c"/>
<path d="M871 586.5V556L886 542V571.5Z" fill="#42443e"/><path d="M841 556H871L886 542H856Z" fill="#6e6e6a"/><path d="M840.5 556H871V586.5H840.5Z" fill="#474943"/><path d="M841 586V556H871V586M841 556L856 542H886V571M871 556L886 542" stroke="#92928c"/>
<path d="M901 586.5V556L916 542V571.5Z" fill="#42443e"/><path d="M871 556H901L916 542H886Z" fill="#6e6e6a"/><path d="M870.5 556H901V586.5H870.5Z" fill="#474943"/><path d="M871 586V556H901V586M871 556L886 542H916V571M901 556L916 542" stroke="#92928c"/>
<path d="M961 586.5V556L976 542V571.5Z" fill="#42443e"/><path d="M931 556H961L976 542H946Z" fill="#6e6e6a"/><path d="M930.5 556H961V586.5H930.5Z" fill="#474943"/><path d="M931 586V556H961V586M931 556L946 542H976V571M961 556L976 542" stroke="#92928c"/>
<path d="M991 586.5V556L1006 542V571.5Z" fill="#42443e"/><path d="M961 556H991L1006 542H976Z" fill="#6e6e6a"/><path d="M960.5 556H991V586.5H960.5Z" fill="#474943"/><path d="M961 586V556H991V586M961 556L976 542H1006V571M991 556L1006 542" stroke="#92928c"/>
<path d="M1021 586.5V556L1036 542V571.5Z" fill="#42443e"/><path d="M991 556H1021L1036 542H1006Z" fill="#6e6e6a"/><path d="M990.5 556H1021V586.5H990.5Z" fill="#474943"/><path d="M991 586V556H1021V586M991 556L1006 542H1036V571M1021 556L1036 542" stroke="#92928c"/>
<path d="M466 601.5V571L481 557V586.5Z" fill="#42443e"/><path d="M436 571H466L481 557H451Z" fill="#6e6e6a"/><path d="M435.5 571H466V601.5H435.5Z" fill="#474943"/><path d="M436 601V571H466V601M436 571L451 557H481V586M466 571L481 557" stroke="#92928c"/>
<path d="M496 601.5V571L511 557V586.5Z" fill="#42443e"/><path d="M466 571H496L511 557H481Z" fill="#6e6e6a"/><path d="M465.5 571H496V601.5H465.5Z" fill="#474943"/><path d="M466 601V571H496V601M466 571L481 557H511V586M496 571L511 557" stroke="#92928c"/>
<path d="M526 601.5V571L541 557V586.5Z" fill="#42443e"/><path d="M496 571H526L541 557H511Z" fill="#6e6e6a"/><path d="M495.5 571H526V601.5H495.5Z" fill="#474943"/><path d="M496 601V571H526V601M496 571L511 557H541V586M526 571L541 557" stroke="#92928c"/>
<path d="M556 601.5V571L571 557V586.5Z" fill="#42443e"/><path d="M526 571H556L571 557H541Z" fill="#6e6e6a"/><path d="M525.5 571H556V601.5H525.5Z" fill="#474943"/><path d="M526 601V571H556V601M526 571L541 557H571V586M556 571L571 557" stroke="#92928c"/>
<path d="M616 601.5V571L631 557V586.5Z" fill="#42443e"/><path d="M586 571H616L631 557H601Z" fill="#6e6e6a"/><path d="M585.5 571H616V601.5H585.5Z" fill="#474943"/><path d="M586 601V571H616V601M586 571L601 557H631V586M616 571L631 557" stroke="#92928c"/>
<path d="M646 601.5V571L661 557V586.5Z" fill="#42443e"/><path d="M616 571H646L661 557H631Z" fill="#6e6e6a"/><path d="M615.5 571H646V601.5H615.5Z" fill="#474943"/><path d="M616 601V571H646V601M616 571L631 557H661V586M646 571L661 557" stroke="#92928c"/>
<path d="M676 601.5V571L691 557V586.5Z" fill="#42443e"/><path d="M646 571H676L691 557H661Z" fill="#6e6e6a"/><path d="M645.5 571H676V601.5H645.5Z" fill="#474943"/><path d="M646 601V571H676V601M646 571L661 557H691V586M676 571L691 557" stroke="#92928c"/>
<path d="M706 601.5V571L721 557V586.5Z" fill="#42443e"/><path d="M676 571H706L721 557H691Z" fill="#6e6e6a"/><path d="M675.5 571H706V601.5H675.5Z" fill="#474943"/><path d="M676 601V571H706V601M676 571L691 557H721V586M706 571L721 557" stroke="#92928c"/>
<path d="M736 601.5V571L751 557V586.5Z" fill="#42443e"/><path d="M706 571H736L751 557H721Z" fill="#6e6e6a"/><path d="M705.5 571H736V601.5H705.5Z" fill="#474943"/><path d="M706 601V571H736V601M706 571L721 557H751V586M736 571L751 557" stroke="#92928c"/>
<path d="M796 601.5V571L811 557V586.5Z" fill="#42443e"/><path d="M766 571H796L811 557H781Z" fill="#6e6e6a"/><path d="M765.5 571H796V601.5H765.5Z" fill="#474943"/><path d="M766 601V571H796V601M766 571L781 557H811V586M796 571L811 557" stroke="#92928c"/>
<path d="M856 601.5V571L871 557V586.5Z" fill="#42443e"/><path d="M826 571H856L871 557H841Z" fill="#6e6e6a"/><path d="M825.5 571H856V601.5H825.5Z" fill="#474943"/><path d="M826 601V571H856V601M826 571L841 557H871V586M856 571L871 557" stroke="#92928c"/>
<path d="M1006 601.5V571L1021 557V586.5Z" fill="#42443e"/><path d="M976 571H1006L1021 557H991Z" fill="#6e6e6a"/><path d="M975.5 571H1006V601.5H975.5Z" fill="#474943"/><path d="M976 601V571H1006V601M976 571L991 557H1021V586M1006 571L1021 557" stroke="#92928c"/>
<path d="M421 616.5V586L436 572V601.5Z" fill="#42443e"/><path d="M391 586H421L436 572H406Z" fill="#6e6e6a"/><path d="M390.5 586H421V616.5H390.5Z" fill="#474943"/><path d="M391 616V586H421V616M391 586L406 572H436V601M421 586L436 572" stroke="#92928c"/>
<path d="M781 616.5V586L796 572V601.5Z" fill="#42443e"/><path d="M751 586H781L796 572H766Z" fill="#6e6e6a"/><path d="M750.5 586H781V616.5H750.5Z" fill="#474943"/><path d="M751 616V586H781V616M751 586L766 572H796V601M781 586L796 572" stroke="#92928c"/>
<path d="M901 616.5V586L916 572V601.5Z" fill="#42443e"/><path d="M871 586H901L916 572H886Z" fill="#6e6e6a"/><path d="M870.5 586H901V616.5H870.5Z" fill="#474943"/><path d="M871 616V586H901V616M871 586L886 572H916V601M901 586L916 572" stroke="#92928c"/>
<path d="M931 616.5V586L946 572V601.5Z" fill="#42443e"/><path d="M901 586H931L946 572H916Z" fill="#6e6e6a"/><path d="M900.5 586H931V616.5H900.5Z" fill="#474943"/><path d="M901 616V586H931V616M901 586L916 572H946V601M931 586L946 572" stroke="#92928c"/>
<path d="M961 616.5V586L976 572V601.5Z" fill="#42443e"/><path d="M931 586H961L976 572H946Z" fill="#6e6e6a"/><path d="M930.5 586H961V616.5H930.5Z" fill="#474943"/><path d="M931 616V586H961V616M931 586L946 572H976V601M961 586L976 572" stroke="#92928c"/>
<path d="M991 616.5V586L1006 572V601.5Z" fill="#42443e"/><path d="M961 586H991L1006 572H976Z" fill="#6e6e6a"/><path d="M960.5 586H991V616.5H960.5Z" fill="#474943"/><path d="M961 616V586H991V616M961 586L976 572H1006V601M991 586L1006 572" stroke="#92928c"/>
</g>
<path d="M391 617 H991 M991.3 617 L1366.3 242" stroke="#0000ff" stroke-width="1" fill="none"/>
</g></svg>
<div class="a" id="tip"><span id="tipt" style="letter-spacing:-0.051px">Nach Klick auf die Welt ist Karol mit Tasten bewegbar</span></div>
<div id="tl"></div>
<div class="a" id="tsp"></div>
<svg class="a" id="pnew" width="11" height="14" viewBox="0 0 11 14"><path d="M0.5 0.5 H7 L10.5 4 V13.5 H0.5 Z" fill="#fff" stroke="#000" stroke-width="1"/><path d="M7 0.5 V4 H10.5" fill="none" stroke="#000" stroke-width="1"/></svg>
<svg class="a" id="popn" width="16" height="14" viewBox="0 0 16 14"><path d="M1 6 H12 V13.5 H1 Z" fill="#8c7a28" stroke="#000" stroke-width="0.8"/><path d="M1 13.5 L4 8.5 H15.5 L12 13.5 Z" fill="#ecd84c" stroke="#000" stroke-width="0.8"/><path d="M1 6 V4.5 H5 L6 6" fill="#ecd84c" stroke="#000" stroke-width="0.8"/><path d="M9 3.5 Q11.5 0.5 14 3.5 M14 3.5 L14.2 1.2 M14 3.5 L11.8 3.2" fill="none" stroke="#000" stroke-width="0.9"/></svg>
<svg class="a" id="psav" width="14" height="14" viewBox="0 0 14 14"><rect x="0.5" y="0.5" width="13" height="13" fill="#8c6a1c" stroke="#000" stroke-width="1"/><rect x="3" y="1" width="8" height="5" fill="#fff"/><rect x="3" y="8.5" width="8" height="5" fill="#000"/><rect x="8.5" y="9.5" width="1.8" height="3" fill="#fff"/></svg>
<svg class="a" id="wnew" width="11" height="14" viewBox="0 0 11 14"><path d="M0.5 0.5 H7 L10.5 4 V13.5 H0.5 Z" fill="#fff" stroke="#000" stroke-width="1"/><path d="M7 0.5 V4 H10.5" fill="none" stroke="#000" stroke-width="1"/></svg>
<svg class="a" id="wopn" width="16" height="14" viewBox="0 0 16 14"><path d="M1 6 H12 V13.5 H1 Z" fill="#8c7a28" stroke="#000" stroke-width="0.8"/><path d="M1 13.5 L4 8.5 H15.5 L12 13.5 Z" fill="#ecd84c" stroke="#000" stroke-width="0.8"/><path d="M1 6 V4.5 H5 L6 6" fill="#ecd84c" stroke="#000" stroke-width="0.8"/><path d="M9 3.5 Q11.5 0.5 14 3.5 M14 3.5 L14.2 1.2 M14 3.5 L11.8 3.2" fill="none" stroke="#000" stroke-width="0.9"/></svg>
<svg class="a" id="wsav" width="14" height="14" viewBox="0 0 14 14"><rect x="0.5" y="0.5" width="13" height="13" fill="#8c6a1c" stroke="#000" stroke-width="1"/><rect x="3" y="1" width="8" height="5" fill="#fff"/><rect x="3" y="8.5" width="8" height="5" fill="#000"/><rect x="8.5" y="9.5" width="1.8" height="3" fill="#fff"/></svg>
<div class="sep" id="sp1"></div>
<div class="sep" id="sp2"></div>
<div class="sep" id="sp3"></div>
<svg class="a" id="chk" width="13" height="14" viewBox="0 0 13 14"><path d="M0.5 0.5 H8.5 L12 4 V13.5 H0.5 Z" fill="#fff" stroke="#000" stroke-width="1"/><path d="M3 7.5 L5.5 10.5 L11 4.5" fill="none" stroke="#1c3cc0" stroke-width="2"/></svg>
<svg class="a" id="play" width="6" height="10" viewBox="0 0 6 10"><path d="M0 0 L6 5 L0 10 Z" fill="#10208c"/></svg>
<svg class="a" id="ffw" width="11" height="10" viewBox="0 0 11 10"><path d="M0 0 L5.5 5 L0 10 Z M5.5 0 L11 5 L5.5 10 Z" fill="#10208c"/></svg>
<svg class="a" id="stp" width="9" height="10" viewBox="0 0 9 10"><path d="M0 0 L5.5 5 L0 10 Z" fill="#10208c"/><rect x="6.5" y="0" width="2" height="10" fill="#10208c"/></svg>
<svg class="a" id="pau" width="8" height="8" viewBox="0 0 8 8"><rect x="0" y="0" width="2.8" height="8" fill="#10208c"/><rect x="5" y="0" width="2.8" height="8" fill="#10208c"/></svg>
<svg class="a" id="stop" width="8" height="8" viewBox="0 0 8 8"><rect width="8" height="8" fill="#10208c"/></svg>
<svg class="a" id="gcir" width="13" height="13" viewBox="0 0 13 13"><circle cx="6.5" cy="6.5" r="5.8" fill="#b4b4b4" stroke="#8c8c8c" stroke-width="1" stroke-dasharray="2 1"/></svg>
<span class="a red" id="lprog" style="letter-spacing:-0.316px">Programm</span>
<div class="sep" id="sp4"></div>
<div class="sep" id="sp5"></div>
<div class="sep" id="sp6"></div>
<div class="sep" id="sp7"></div>
<svg class="a" id="arl" width="15" height="15" viewBox="0 0 15 15"><g transform="rotate(0 7.5 7.5)"><path d="M1 7.5 L7 2 V5.2 H14 V9.8 H7 V13 Z" fill="#3c9cf0" stroke="#0c2c8c" stroke-width="1" stroke-linejoin="round"/></g></svg>
<svg class="a" id="aru" width="15" height="15" viewBox="0 0 15 15"><g transform="rotate(90 7.5 7.5)"><path d="M1 7.5 L7 2 V5.2 H14 V9.8 H7 V13 Z" fill="#3c9cf0" stroke="#0c2c8c" stroke-width="1" stroke-linejoin="round"/></g></svg>
<svg class="a" id="arr" width="15" height="15" viewBox="0 0 15 15"><g transform="rotate(180 7.5 7.5)"><path d="M1 7.5 L7 2 V5.2 H14 V9.8 H7 V13 Z" fill="#3c9cf0" stroke="#0c2c8c" stroke-width="1" stroke-linejoin="round"/></g></svg>
<span class="a let" id="lt0" style="letter-spacing:-2.072px">H</span>
<span class="a let" id="lt1" style="letter-spacing:-0.716px">A</span>
<span class="a let" id="lt2" style="letter-spacing:-1.6px">M</span>
<span class="a let" id="lt3" style="letter-spacing:-1.644px">Q</span>
<span class="a let" id="lt4" style="letter-spacing:-2.416px">E</span>
<span class="a let" id="lt5" style="letter-spacing:-1.388px">L</span>
<span class="a let" id="lt6" style="letter-spacing:-0.028px">W</span>
<span class="a let" id="lt7" style="letter-spacing:-0.972px">2D</span>
<span class="a red" id="lwelt" style="letter-spacing:0.73px">Welt</span>
<div id="tree">
<div class="a" id="vdl"></div>
<span class="t" id="tr0" style="letter-spacing:-0.234px">Kontrollstrukturen</span>
<svg class="a" id="pl0" width="9" height="9" viewBox="0 0 9 9"><rect x="0.5" y="0.5" width="8" height="8" fill="#fff" stroke="#808080"/><path d="M2 4.5 H7 M4.5 2 V7" stroke="#000" stroke-width="1"/></svg>
<div class="a" id="dl0"></div>
<svg class="a" id="tg0" width="6" height="10" viewBox="0 0 6 10"><path d="M0 0 L6 5 L0 10 Z" fill="#10208c"/></svg>
<span class="t" id="tr1" style="letter-spacing:-0.171px">Vordefinierte Anweisungen</span>
<svg class="a" id="pl1" width="9" height="9" viewBox="0 0 9 9"><rect x="0.5" y="0.5" width="8" height="8" fill="#fff" stroke="#808080"/><path d="M2 4.5 H7 M4.5 2 V7" stroke="#000" stroke-width="1"/></svg>
<div class="a" id="dl1"></div>
<svg class="a" id="tg1" width="6" height="10" viewBox="0 0 6 10"><path d="M0 0 L6 5 L0 10 Z" fill="#10208c"/></svg>
<span class="t" id="tr2" style="letter-spacing:-0.187px">Vordefinierte Bedingungen</span>
<svg class="a" id="pl2" width="9" height="9" viewBox="0 0 9 9"><rect x="0.5" y="0.5" width="8" height="8" fill="#fff" stroke="#808080"/><path d="M2 4.5 H7 M4.5 2 V7" stroke="#000" stroke-width="1"/></svg>
<div class="a" id="dl2"></div>
<svg class="a" id="tg2" width="6" height="10" viewBox="0 0 6 10"><path d="M0 0 L6 5 L0 10 Z" fill="#10208c"/></svg>
<span class="t" id="tr3" style="letter-spacing:-0.072px">Eigene Anweisungen/Bedingungen</span>
<div class="a" id="dl3"></div>
<svg class="a" id="tg3" width="10" height="11" viewBox="0 0 10 11"><path d="M0.5 0.5 H6.5 L9.5 3.5 V10.5 H0.5 Z" fill="#fff" stroke="#10208c"/><path d="M2.5 4.5 H7.5 M2.5 6.5 H7.5 M2.5 8.5 H7.5" stroke="#10208c" stroke-width="0.9"/></svg>
<span class="t" id="tr4" style="letter-spacing:-0.369px">Dieses Programm</span>
<div class="a" id="dl4"></div>
<svg class="a" id="tg4" width="13" height="13" viewBox="0 0 13 13"><circle cx="6.5" cy="6.5" r="6" fill="#9c9c9c"/><path d="M3 4 L8 2.5 L10.5 4.5 L10.5 9.5 L5.5 11 L3 9 Z" fill="#c8c8c8" stroke="#6c6c6c" stroke-width="0.6"/><path d="M3 4 L5.5 6 L10.5 4.5 M5.5 6 V11" stroke="#6c6c6c" stroke-width="0.6" fill="none"/></svg>
</div>
<div id="log"><span id="lg0" style="letter-spacing:-0.075px">Programm : L:\websites\info\lex05\download\karol_programme\labyrinth\labyrinth.kdp</span><span id="lg1" style="letter-spacing:-0.018px">Welt : L:\websites\info\lex05\download\karol_programme\labyrinth\labyrinth.kdw</span><span id="lg2" style="letter-spacing:-0.664px">----------</span></div>
<svg class="a" id="rfr" width="13" height="17" viewBox="0 0 13 17"><path d="M0.5 0.5 H8.5 L12.5 4.5 V16.5 H0.5 Z" fill="#fff" stroke="#000" stroke-width="1"/><path d="M4 9 Q4 5.5 7.5 5.5 M7.5 5.5 L6 4 M7.5 5.5 L6 7" stroke="#0c8c2c" stroke-width="1.4" fill="none"/><path d="M9 9 Q9 12.5 5.5 12.5 M5.5 12.5 L7 11 M5.5 12.5 L7 14" stroke="#0c8c2c" stroke-width="1.4" fill="none"/></svg>
<span class="a red" id="lueb" style="letter-spacing:0.106px">Übersicht</span>
<span class="a red" id="linf" style="letter-spacing:-0.125px">Informat</span>
<div class="a" id="vsp"></div>
<div class="sf" id="sf0"><span id="sl0" style="letter-spacing:-0.453px">Position X:</span><span id="sv0">1</span></div>
<div class="sf" id="sf1"><span id="sl1" style="letter-spacing:-0.376px">Position Y:</span><span id="sv1">1</span></div>
<div class="sf" id="sf2"><span id="sl2" style="letter-spacing:-0.314px">Blickrichtung:</span><span id="sv2">S</span></div>
<div class="sf" id="sf3"><span id="sl3" style="letter-spacing:-0.362px">Ziegel:</span></div>
<svg class="a" id="inf" width="36" height="34" viewBox="0 0 36 34"><rect x="0.5" y="0.5" width="32" height="40" fill="#f0f0f0" stroke="#1c1c1c" stroke-width="1"/><rect x="33" y="0" width="3" height="34" fill="#f0f0f0"/><rect x="8.5" y="7.5" width="18" height="12" fill="#fafafa" stroke="#303030" stroke-width="2.4"/><rect x="5" y="22" width="26" height="4" fill="#2cb03c"/><path d="M26 29 L31.5 29 L28.8 32 Z" fill="#000"/></svg>
<div id="tk"></div>
<svg class="a" id="orb" width="42" height="35" viewBox="0 0 42 35"><defs><radialGradient id="og" cx="0.5" cy="0.3" r="0.75"><stop offset="0" stop-color="#9fd0f2"/><stop offset="0.45" stop-color="#2f74bc"/><stop offset="1" stop-color="#0a2852"/></radialGradient></defs>
<circle cx="21" cy="21" r="20.5" fill="#0c1c30"/><circle cx="21" cy="21" r="18.5" fill="url(#og)" stroke="#86b4dc" stroke-width="1.2"/>
<path d="M12 13.5 Q16 11.5 20 14 L19 20.5 Q15 18.5 10.5 20 Z" fill="#ec5a2c"/><path d="M21.5 14.5 Q26 17 30.5 14.5 L29.5 21.5 Q25 23.5 20.5 21 Z" fill="#8cc63e"/><path d="M10.3 21.5 Q14.5 20 18.8 22 L17.8 28.5 Q13.5 26.5 9 28 Z" fill="#3c90e4"/><path d="M20.2 22.5 Q24.5 25 29.3 23 L28.3 29.5 Q23.5 31.5 19.2 29 Z" fill="#f6c828"/></svg>
<div class="a" id="gr1"></div>
<div class="a" id="gr2"></div>
<div class="a" id="gr3"></div>
<svg class="a" id="ql0" width="16" height="16" viewBox="0 0 16 16"><circle cx="8" cy="8" r="7" fill="#3c7cd0"/><path d="M1.5 6 Q8 2 14.5 7 M1.5 10 Q8 6 14.5 11" stroke="#e8f0f8" stroke-width="1.6" fill="none"/></svg>
<svg class="a" id="ql1" width="16" height="16" viewBox="0 0 16 16"><rect x="2" y="2" width="12" height="13" fill="#a8c8ec" stroke="#5078a8"/><path d="M4 2 V0.5 M6.5 2 V0.5 M9 2 V0.5 M11.5 2 V0.5" stroke="#c8c8c8"/><path d="M4 6 H12 M4 9 H12 M4 12 H12" stroke="#6c94c4" stroke-width="0.8"/></svg>
<svg class="a" id="ql2" width="16" height="16" viewBox="0 0 16 16"><path d="M3 1 H8 M5.5 1 V15 M3 15 H8" stroke="#f4e43c" stroke-width="1.6"/><circle cx="10.5" cy="9" r="4.5" fill="#3c8c4c"/><circle cx="10.5" cy="9" r="2" fill="#2c5ca8"/></svg>
<svg class="a" id="ql3" width="16" height="16" viewBox="0 0 16 16"><circle cx="8" cy="8" r="7" fill="#e04030"/><path d="M8 8 L1.5 11 A7 7 0 0 0 12 14 Z" fill="#3ca84c"/><path d="M8 8 L12 14 A7 7 0 0 0 14.5 5 Z" fill="#f4c81c"/><circle cx="8" cy="8" r="3" fill="#4c8ce8" stroke="#fff" stroke-width="1"/></svg>
<svg class="a" id="ql4" width="16" height="16" viewBox="0 0 16 16"><ellipse cx="8" cy="9" rx="7.5" ry="5" fill="#e89c3c" stroke="#8c5c1c" stroke-width="0.6"/><circle cx="4.5" cy="8" r="1.3" fill="#d02020"/><circle cx="8" cy="6.5" r="1.3" fill="#2050d0"/><circle cx="11.5" cy="8" r="1.3" fill="#f0e020"/><path d="M2 2 L12 12" stroke="#5c3c8c" stroke-width="1.6"/></svg>
<svg class="a" id="ql5" width="16" height="16" viewBox="0 0 16 16"><path d="M1 4 L12 2 L15 12 L4 14 Z" fill="#d8e8e0" stroke="#7c9c8c" stroke-width="0.6"/><path d="M5 5 L11 11 M11 5 L5 11" stroke="#1c8c4c" stroke-width="2"/></svg>
<svg class="a" id="ql6" width="16" height="16" viewBox="0 0 16 16"><rect x="1.5" y="2" width="13" height="12" fill="#dce4f0" stroke="#8c98b0"/><rect x="2.5" y="3" width="11" height="3" fill="#6c8cc8"/><path d="M3 8 H13 M3 10 H13 M3 12 H13 M5.5 7 V13 M8 7 V13 M10.5 7 V13" stroke="#8c98b0" stroke-width="0.7"/></svg>
<svg class="a" id="ql7" width="16" height="16" viewBox="0 0 16 16"><path d="M2.5 1 H10 L13.5 4.5 V15 H2.5 Z" fill="#f4f4f4" stroke="#a0a0a0"/><rect x="5" y="6" width="6" height="5" fill="#c8d8f0" stroke="#8098c0" stroke-width="0.6"/><path d="M6 10 L8 7.5 L10 10" fill="#e08030"/></svg>
<svg class="a" id="ql8" width="16" height="16" viewBox="0 0 16 16"><circle cx="9" cy="8" r="5" fill="none" stroke="#e8a020" stroke-width="2.2" stroke-dasharray="2.4 1.6"/><circle cx="9" cy="8" r="2" fill="#e8a020"/><rect x="1" y="8" width="4.5" height="7" fill="#2c8c3c"/></svg>
<svg class="a" id="ql9" width="16" height="16" viewBox="0 0 16 16"><circle cx="8" cy="7" r="5.5" fill="none" stroke="#e01818" stroke-width="2.4"/><path d="M5 12 V15 M11 12 V15" stroke="#e01818" stroke-width="1.8"/></svg>
<svg class="a" id="ql10" width="16" height="16" viewBox="0 0 16 16"><circle cx="8" cy="8" r="7" fill="#3c9ce0"/><path d="M3 8 Q6 5 8 8 Q10 5 13 8 M4 10.5 Q8 9 12 10.5" stroke="#f0f8ff" stroke-width="1.4" fill="none"/></svg>
<svg class="a" id="ql11" width="16" height="16" viewBox="0 0 16 16"><rect x="5" y="1" width="6" height="7" fill="#e8f0f8" stroke="#6080b0" stroke-width="0.7"/><path d="M6.5 3 H9.5 M6.5 5 H9.5" stroke="#6080b0" stroke-width="0.7"/><path d="M2 14 L5 9 H11 L14 14 Z" fill="#2858c0"/><path d="M7 9 L8 14" stroke="#f0f0f0" stroke-width="1.4"/></svg>
<svg class="a" id="ql12" width="16" height="16" viewBox="0 0 16 16"><rect x="1" y="3" width="11" height="8" fill="#f0d820" stroke="#404040" stroke-width="0.7"/><rect x="4" y="6" width="11" height="8" fill="none" stroke="#f0f0f0" stroke-width="1"/><path d="M2.5 5.5 H10 M2.5 7.5 H10" stroke="#806c10" stroke-width="0.7"/></svg>
<svg class="a" id="ql13" width="16" height="16" viewBox="0 0 16 16"><rect x="4" y="2" width="11" height="9" fill="#2c6cd8" stroke="#c8d0d8" stroke-width="1.2"/><rect x="7" y="12" width="5" height="1.5" fill="#c8d0d8"/><rect x="5" y="13.5" width="9" height="1.5" fill="#a8b0b8"/><rect x="1" y="7" width="3" height="8" fill="#d0d4d8"/><circle cx="9.5" cy="6.5" r="2" fill="#e03030"/></svg>
<div class="tb" id="tb0"><svg class="a" id="ti0" width="16" height="16" viewBox="0 0 16 16"><path d="M1 3 H6 L7.5 4.5 H13 V15 H1 Z" fill="#e8c440" stroke="#8c6c10" stroke-width="0.6"/><path d="M1 15 L3 7 H15 L13 15 Z" fill="#f8e078" stroke="#8c6c10" stroke-width="0.6"/><path d="M8 8 L11 3 L14 8 H12 V11 H10 V8 Z" fill="#38a838" stroke="#0c5c0c" stroke-width="0.5"/></svg><span id="tt0" style="letter-spacing:0.03px">karol_programme</span></div>
<div class="tb" id="tb1"><svg class="a" id="ti1" width="16" height="16" viewBox="0 0 16 16"><path d="M1 3 H6 L7.5 4.5 H13 V15 H1 Z" fill="#e8c440" stroke="#8c6c10" stroke-width="0.6"/><path d="M1 15 L3 7 H15 L13 15 Z" fill="#f8e078" stroke="#8c6c10" stroke-width="0.6"/><path d="M8 8 L11 3 L14 8 H12 V11 H10 V8 Z" fill="#38a838" stroke="#0c5c0c" stroke-width="0.5"/></svg><span id="tt1" style="letter-spacing:0.101px">rfriedrich</span></div>
<div class="tb" id="tb2"><svg class="a" id="ti2" width="16" height="16" viewBox="0 0 16 16"><path d="M1 3 H6 L7.5 4.5 H13 V15 H1 Z" fill="#e8c440" stroke="#8c6c10" stroke-width="0.6"/><path d="M1 15 L3 7 H15 L13 15 Z" fill="#f8e078" stroke="#8c6c10" stroke-width="0.6"/><path d="M8 8 L11 3 L14 8 H12 V11 H10 V8 Z" fill="#38a838" stroke="#0c5c0c" stroke-width="0.5"/></svg><span id="tt2" style="letter-spacing:0.182px">labyrinth</span></div>
<div class="tb" id="tb3"><svg class="a" id="ti3" width="16" height="16" viewBox="0 0 16 16"><rect x="1.5" y="2" width="13" height="9" fill="#fff" stroke="#f0f0f0" stroke-width="1.6"/><rect x="3" y="3.5" width="10" height="6" fill="#202020"/><rect x="1" y="12.5" width="14" height="2" fill="#30b040"/></svg><span id="tt3" style="letter-spacing:-0.311px">WebWeaver Deskt...</span></div>
<div class="tb act" id="tb4"><svg class="a" id="ti4" width="16" height="16" viewBox="0 0 16 16"><rect x="0" y="1" width="15" height="14" fill="#c8c8c8"/><rect x="2.5" y="1" width="4" height="3" fill="#000"/><rect x="2.5" y="4" width="3.5" height="2.5" fill="#f0c000"/><rect x="1" y="6.5" width="6" height="5.5" fill="#e01010"/><rect x="1" y="12" width="2.3" height="3" fill="#1030e0"/><rect x="4" y="12" width="2.3" height="3" fill="#1030e0"/><polygon points="7,9 12,8 15,9.5 15,14.5 9,15 7,14" fill="#e01010"/></svg><span id="tt4" style="letter-spacing:-0.125px">Robot Karol</span></div>
<div class="tb" id="tb5"><svg class="a" id="ti5" width="16" height="16" viewBox="0 0 16 16"><rect x="0.5" y="0.5" width="15" height="15" fill="#2030d8" stroke="#c8d0f0"/><path d="M4.5 4.5 L11.5 11.5 M4.5 4.5 H8 M4.5 4.5 V8 M11.5 11.5 H8 M11.5 11.5 V8" stroke="#fff" stroke-width="1.6" fill="none"/></svg><span id="tt5" style="letter-spacing:0.015px">Microsoft FrontPa...</span></div>
<div class="tb" id="tb6"><svg class="a" id="ti6" width="16" height="16" viewBox="0 0 16 16"><ellipse cx="8" cy="9" rx="7.5" ry="5" fill="#e89c3c" stroke="#8c5c1c" stroke-width="0.6"/><circle cx="4.5" cy="8" r="1.3" fill="#d02020"/><circle cx="8" cy="6.5" r="1.3" fill="#2050d0"/><circle cx="11.5" cy="8" r="1.3" fill="#f0e020"/><path d="M2 2 L12 12" stroke="#5c3c8c" stroke-width="1.6"/></svg><span id="tt6" style="letter-spacing:-0.19px">Paint Shop Pro - ...</span></div>
<span class="a tw" id="tde" style="letter-spacing:-1.336px">DE</span>
<svg class="a" id="tlt" width="6" height="9" viewBox="0 0 6 9"><path d="M5 0.5 L1 4.5 L5 8.5" stroke="#fff" stroke-width="1.6" fill="none"/></svg>
<svg class="a" id="ty0" width="16" height="16" viewBox="0 0 16 16"><rect x="0" y="0" width="16" height="16" rx="2" fill="#e8742c"/><path d="M4 11 H12 M5 9 Q8 6 7 3 M9 9 Q11 7 10 5" stroke="#fff" stroke-width="1.2" fill="none"/></svg>
<svg class="a" id="ty1" width="16" height="16" viewBox="0 0 16 16"><circle cx="8" cy="8" r="7.5" fill="#28a038"/><path d="M2 5 L14 5 M1 8 H15 M2 11 H14 M5 1 V15 M8 0.5 V15.5 M11 1 V15" stroke="#0c5c18" stroke-width="0.6"/></svg>
<svg class="a" id="ty2" width="16" height="16" viewBox="0 0 16 16"><rect x="1" y="1" width="6" height="14" fill="#c8c8c8" stroke="#606060" stroke-width="0.6"/><rect x="6" y="5" width="9" height="7" fill="#3c7cc8"/><path d="M8 4 Q14 3 14 9" stroke="#28a0e8" stroke-width="1.4" fill="none"/></svg>
<svg class="a" id="ty3" width="16" height="16" viewBox="0 0 16 16"><rect x="3" y="1" width="10" height="8" fill="#2c6cd8" stroke="#d0d8e0" stroke-width="1.2"/><rect x="0.5" y="5" width="9" height="7" fill="#3c7ce0" stroke="#d0d8e0" stroke-width="1.2"/><circle cx="11" cy="11.5" r="4" fill="#2c9c3c" stroke="#0c4c8c" stroke-width="0.6"/></svg>
<svg class="a" id="ty4" width="16" height="16" viewBox="0 0 16 16"><path d="M1 6 H4 L8 2 V14 L4 10 H1 Z" fill="#e8e8e8"/><path d="M10 5 Q12 8 10 11 M12.5 3.5 Q15.5 8 12.5 12.5" stroke="#38b848" stroke-width="1.2" fill="none"/></svg>
<span class="a tw" id="tclk" style="letter-spacing:-0.406px">07:42</span>

</body></html>
